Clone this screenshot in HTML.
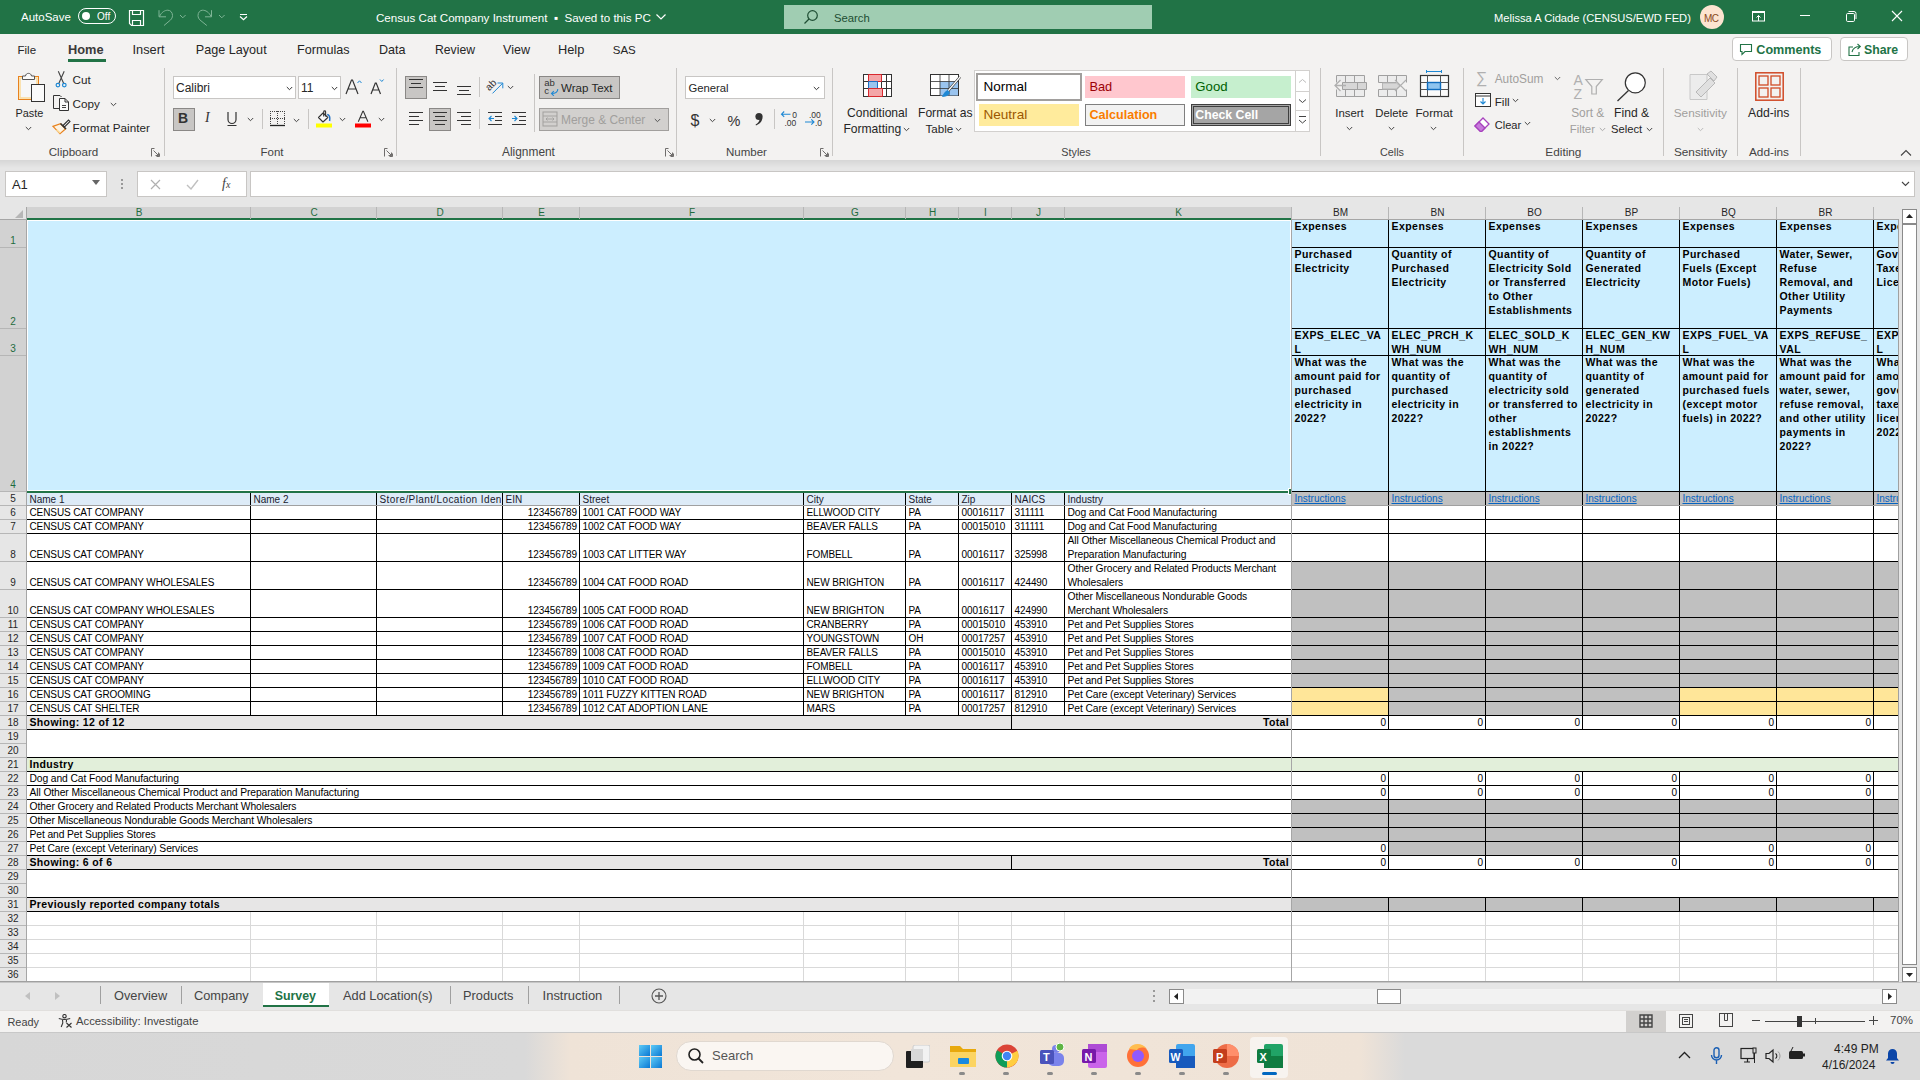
<!DOCTYPE html><html><head><meta charset="utf-8"><style>
*{margin:0;padding:0;box-sizing:border-box}
body{width:1920px;height:1080px;position:relative;overflow:hidden;background:#fff;font-family:"Liberation Sans",sans-serif;color:#000}
body div,body svg{position:absolute}
.t{white-space:nowrap;line-height:1}
.c{white-space:nowrap;font-size:10px;line-height:14px;height:14px}
.ui{font-size:12px;color:#262626;white-space:nowrap;line-height:1}
</style></head><body><div style="left:0;top:0;width:1920px;height:34px;background:#217346"></div>
<div class="t" style="left:21px;top:12px;font-size:11.5px;color:#fff">AutoSave</div>
<div style="left:78px;top:8px;width:38px;height:16px;border:1.3px solid #fff;border-radius:8px"></div>
<div style="left:82px;top:12px;width:8px;height:8px;background:#fff;border-radius:50%"></div>
<div class="t" style="left:97px;top:12px;font-size:10px;color:#fff">Off</div>
<svg style="left:128px;top:9px" width="18" height="18" viewBox="0 0 18 18"><path d="M1.5 1.5h14v15h-12l-2-2z" fill="none" stroke="#fff" stroke-width="1.2"/><path d="M4.5 1.5v4h8v-4M4.5 16.5v-5h8v5" fill="none" stroke="#fff" stroke-width="1.2"/></svg>
<svg style="left:158px;top:9px" width="30" height="18" viewBox="0 0 30 18"><path d="M1 1.2V7.8H8M1.5 7.5C3.5 3 7 1.2 9.8 1.2 12.5 1.2 14.5 3.5 14.5 6.5 14.5 8.5 13.5 10 12.5 11L6 16.5" fill="none" stroke="#7fb596" stroke-width="1"/><path d="M22 6l2.8 2.8L27.6 6" fill="none" stroke="#7fb596" stroke-width="1"/></svg>
<svg style="left:197px;top:9px" width="30" height="18" viewBox="0 0 30 18"><path d="M14.5 1.2V7.8H8M14 7.5C12 3 8.5 1.2 5.7 1.2 3 1.2 1 3.5 1 6.5 1 8.5 2 10 3 11L9.8 16.5" fill="none" stroke="#7fb596" stroke-width="1"/><path d="M22 6l2.8 2.8L27.6 6" fill="none" stroke="#7fb596" stroke-width="1"/></svg>
<svg style="left:239px;top:13px" width="9" height="8" viewBox="0 0 9 8"><path d="M1 1.5h7" stroke="#fff" stroke-width="1"/><path d="M1 3.5l3.5 3.2L8 3.5" fill="none" stroke="#fff" stroke-width="1.2"/></svg>
<div class="t" style="left:376px;top:12px;font-size:11.6px;color:#fff">Census Cat Company Instrument &nbsp;&#x25AA;&nbsp; Saved to this PC</div>
<svg style="left:655px;top:12px" width="12" height="10" viewBox="0 0 12 10"><path d="M1.5 2.5l4.5 4.5 4.5-4.5" fill="none" stroke="#fff" stroke-width="1.2"/></svg>
<div style="left:784px;top:5px;width:368px;height:24px;background:#a0cdb2"></div>
<svg style="left:803px;top:9px" width="16" height="16" viewBox="0 0 16 16"><circle cx="9.5" cy="6.5" r="4.8" fill="none" stroke="#1e4d33" stroke-width="1.2"/><path d="M6 10L1.5 14.5" stroke="#1e4d33" stroke-width="1.3"/></svg>
<div class="t" style="left:834px;top:13px;font-size:11.3px;color:#1e4d33">Search</div>
<div class="t" style="left:1494px;top:13px;font-size:11.15px;color:#fff">Melissa A Cidade (CENSUS/EWD FED)</div>
<div style="left:1700px;top:5px;width:24px;height:24px;border-radius:50%;background:#fce4d0"></div>
<div class="t" style="left:1704px;top:14px;font-size:10px;color:#8a4a1c;letter-spacing:-0.5px">MC</div>
<svg style="left:1751px;top:10px" width="16" height="14" viewBox="0 0 16 14"><rect x="1.5" y="1.5" width="12" height="9.5" fill="none" stroke="#fff" stroke-width="1"/><path d="M1.5 2.5h12M7.5 11V5.5M5.5 7.5l2-2 2 2" fill="none" stroke="#fff" stroke-width="1"/></svg>
<div style="left:1800px;top:15px;width:10px;height:1px;background:#fff"></div>
<svg style="left:1845px;top:10px" width="13" height="13" viewBox="0 0 13 13"><rect x="1.5" y="3.5" width="8" height="8" rx="1.2" fill="none" stroke="#fff" stroke-width="1"/><path d="M3.5 1.5h5.5a2 2 0 0 1 2 2V9" fill="none" stroke="#fff" stroke-width="1"/></svg>
<svg style="left:1891px;top:10px" width="12" height="12" viewBox="0 0 12 12"><path d="M1 1l10 10M11 1L1 11" stroke="#fff" stroke-width="1.1"/></svg>
<div style="left:0;top:34px;width:1920px;height:126px;background:#f3f2f1"></div>
<div class="t" style="left:17.5px;top:45px;font-size:11.5px;color:#262626">File</div>
<div class="t" style="left:68px;top:44px;font-size:12.8px;color:#262626;font-weight:bold;color:#3b3a39">Home</div>
<div class="t" style="left:132.5px;top:44px;font-size:12.8px;color:#262626">Insert</div>
<div class="t" style="left:195.75px;top:44px;font-size:12.64px;color:#262626">Page Layout</div>
<div class="t" style="left:297px;top:44px;font-size:12.6px;color:#262626">Formulas</div>
<div class="t" style="left:379px;top:44px;font-size:12.55px;color:#262626">Data</div>
<div class="t" style="left:435px;top:44px;font-size:12.2px;color:#262626">Review</div>
<div class="t" style="left:503px;top:44px;font-size:12.56px;color:#262626">View</div>
<div class="t" style="left:558px;top:44px;font-size:12.8px;color:#262626">Help</div>
<div class="t" style="left:612.75px;top:45px;font-size:11.5px;color:#262626">SAS</div>
<div style="left:68px;top:59px;width:38px;height:3px;background:#217346"></div>
<div style="left:1732px;top:37px;width:100px;height:24px;border:1px solid #c8c6c4;border-radius:4px;background:#fff"></div>
<svg style="left:1739px;top:43px" width="14" height="13" viewBox="0 0 14 13"><path d="M1.5 1.5h11v7H6l-3 3v-3H1.5z" fill="none" stroke="#217346" stroke-width="1.1"/></svg>
<div class="t" style="left:1756.3px;top:44px;font-size:12.6px;color:#217346;font-weight:bold">Comments</div>
<div style="left:1840px;top:37px;width:68px;height:24px;border:1px solid #c8c6c4;border-radius:4px;background:#fff"></div>
<svg style="left:1847px;top:42px" width="16" height="15" viewBox="0 0 16 15"><path d="M6 5H2v8.5h10V10" fill="none" stroke="#217346" stroke-width="1.1"/><path d="M5 10c1-4 4-5.5 8-5.5M10.5 2l2.8 2.5-2.8 2.5" fill="none" stroke="#217346" stroke-width="1.1"/></svg>
<div class="t" style="left:1864px;top:44px;font-size:12.3px;color:#217346;font-weight:bold">Share</div>
<svg style="left:16px;top:70px" width="32" height="34" viewBox="0 0 32 34"><rect x="2.5" y="6.5" width="20" height="23" fill="#f7f7f7" stroke="#e8821e" stroke-width="1"/><rect x="4" y="8" width="17" height="20" fill="none" stroke="#fbdb9a" stroke-width="1.5"/><path d="M6.5 9.5V6H9.5C9.8 2.5 15.2 2.5 15.5 6H18.5V9.5z" fill="#fafafa" stroke="#555" stroke-width="1"/><rect x="15.5" y="14.5" width="13" height="17" fill="#fafafa" stroke="#333" stroke-width="1"/></svg>
<div class="t" style="left:15.5px;top:108px;font-size:10.9px;color:#262626">Paste</div>
<svg style="left:25px;top:126px" width="7" height="5" viewBox="0 0 7 5"><path d="M0.8 1l2.7 2.7L6.2 1" fill="none" stroke="#444" stroke-width="1"/></svg>
<svg style="left:55px;top:71px" width="13" height="17" viewBox="0 0 13 17"><path d="M3.3 0.3L8.6 12.2M9.2 0.3L3.9 12.2" stroke="#444" stroke-width="1.1"/><circle cx="2.9" cy="14.1" r="1.8" fill="none" stroke="#1e88d4" stroke-width="1.2"/><circle cx="9.3" cy="14.1" r="1.8" fill="none" stroke="#1e88d4" stroke-width="1.2"/></svg>
<div class="t" style="left:72.5px;top:74px;font-size:11.7px;color:#262626">Cut</div>
<svg style="left:52px;top:94px" width="18" height="18" viewBox="0 0 18 18"><path d="M7 14.5H1.5V1.5H8L9.5 3" fill="none" stroke="#333" stroke-width="1"/><path d="M7.5 4.5H13L16.5 8V16.5H7.5Z" fill="#fafafa" stroke="#333" stroke-width="1"/><path d="M13 4.5V8H16.5" fill="none" stroke="#333" stroke-width="1"/><path d="M10 11.5H14M10 13.5H14" stroke="#444" stroke-width="1"/></svg>
<div class="t" style="left:72.5px;top:98px;font-size:11.7px;color:#262626">Copy</div>
<svg style="left:110px;top:102px" width="7" height="5" viewBox="0 0 7 5"><path d="M0.8 1l2.7 2.7L6.2 1" fill="none" stroke="#444" stroke-width="1"/></svg>
<svg style="left:52px;top:117px" width="19" height="18" viewBox="0 0 19 18"><path d="M1 9.4L8 16.75 13.5 12 8.5 6.7Z" fill="#fdf3e3" stroke="#e8821e" stroke-width="1.2"/><path d="M4.5 12.8L8.2 16" stroke="#fbdb9a" stroke-width="1.6"/><path d="M11 8.5L16.5 3 18 4.5 12.5 10Z" fill="#fafafa" stroke="#333" stroke-width="1.1"/><path d="M8.5 6.5L14 12" stroke="#333" stroke-width="1.6"/></svg>
<div class="t" style="left:72.5px;top:122px;font-size:11.7px;color:#262626">Format Painter</div>
<div class="t" style="left:13.5px;top:146px;width:120px;text-align:center;font-size:11.6px;color:#444">Clipboard</div>
<svg style="left:151px;top:148px" width="9" height="9" viewBox="0 0 9 9"><path d="M0.5 8.5V0.5h3M8.5 5.5v3h-3M2.5 2.5l5 5M4.5 7.5h3v-3" fill="none" stroke="#605e5c" stroke-width="0.9"/></svg>
<div style="left:164px;top:68px;width:1px;height:88px;background:#c8c6c4"></div>
<div style="left:173px;top:76px;width:123px;height:23px;background:#fff;border:1px solid #c8c6c4"></div>
<div class="t" style="left:176px;top:82px;font-size:12px;color:#262626">Calibri</div>
<svg style="left:285.5px;top:86px" width="7" height="5" viewBox="0 0 7 5"><path d="M0.8 1l2.7 2.7L6.2 1" fill="none" stroke="#333" stroke-width="1"/></svg>
<div style="left:298px;top:76px;width:43px;height:23px;background:#fff;border:1px solid #c8c6c4"></div>
<div class="t" style="left:301px;top:82px;font-size:12px;color:#262626">11</div>
<svg style="left:331px;top:86px" width="7" height="5" viewBox="0 0 7 5"><path d="M0.8 1l2.7 2.7L6.2 1" fill="none" stroke="#333" stroke-width="1"/></svg>
<svg style="left:345px;top:78px" width="40" height="18" viewBox="0 0 40 18"><path d="M1 16L6.5 2h1L13 16M3.2 11h8" fill="none" stroke="#333" stroke-width="1.2"/><path d="M12.5 5l2-2.2 2 2.2" fill="none" stroke="#1e88d4" stroke-width="1"/><path d="M26 16l4.3-11h0.9L35.5 16M27.8 12h5.9" fill="none" stroke="#333" stroke-width="1.2"/><path d="M35 1.5l1.8 2 1.8-2" fill="none" stroke="#1e88d4" stroke-width="1"/></svg>
<div style="left:173px;top:108px;width:22px;height:23px;background:#c8c6c4;border:1px solid #8a8886"></div>
<div class="t" style="left:178px;top:111px;font-size:14px;font-weight:bold;color:#333">B</div>
<div class="t" style="left:205px;top:111px;font-size:14px;font-style:italic;font-family:'Liberation Serif';color:#333">I</div>
<svg style="left:225px;top:110px" width="14" height="18" viewBox="0 0 14 18"><path d="M3 2v7.5a4 4 0 0 0 8 0V2M2.5 15.5h9" fill="none" stroke="#333" stroke-width="1.2"/></svg>
<svg style="left:246.5px;top:117px" width="7" height="5" viewBox="0 0 7 5"><path d="M0.8 1l2.7 2.7L6.2 1" fill="none" stroke="#444" stroke-width="1"/></svg>
<div style="left:262px;top:109px;width:1px;height:20px;background:#c8c6c4"></div>
<svg style="left:269px;top:110px" width="17" height="17" viewBox="0 0 17 17"><path d="M1 1.5h15M1 8.5h15" fill="none" stroke="#444" stroke-width="1" stroke-dasharray="1 1"/><path d="M1.5 1v14M8.5 1v14M15.5 1v14" fill="none" stroke="#444" stroke-width="1" stroke-dasharray="1 1"/><path d="M1 15.5h15" stroke="#222" stroke-width="1.3"/></svg>
<svg style="left:293px;top:118px" width="7" height="5" viewBox="0 0 7 5"><path d="M0.8 1l2.7 2.7L6.2 1" fill="none" stroke="#444" stroke-width="1"/></svg>
<div style="left:308px;top:109px;width:1px;height:20px;background:#c8c6c4"></div>
<svg style="left:315px;top:110px" width="18" height="18" viewBox="0 0 18 18"><path d="M3.5 7.5L8 3 12.8 7.5 8 12Z" fill="#fafafa" stroke="#333" stroke-width="1.1" stroke-linejoin="round"/><path d="M8.7 6.5V1.8C8.7 0.6 10.6 0.6 10.6 1.8V6.5" fill="none" stroke="#333" stroke-width="1.1"/><path d="M12.2 4.4C14.5 4.8 15.3 7.5 14.6 11" fill="none" stroke="#1e6fc4" stroke-width="1.5"/><rect x="1" y="13.5" width="16" height="4" fill="#ffff00"/></svg>
<svg style="left:338.5px;top:117px" width="7" height="5" viewBox="0 0 7 5"><path d="M0.8 1l2.7 2.7L6.2 1" fill="none" stroke="#444" stroke-width="1"/></svg>
<svg style="left:354px;top:110px" width="18" height="18" viewBox="0 0 18 18"><path d="M4.3 11.8L8.8 1.2h0.6L13.9 11.8M6 7.8h6.2" fill="none" stroke="#333" stroke-width="1.05"/><rect x="1" y="13.5" width="16" height="4" fill="#ff0000"/></svg>
<svg style="left:377.5px;top:117px" width="7" height="5" viewBox="0 0 7 5"><path d="M0.8 1l2.7 2.7L6.2 1" fill="none" stroke="#444" stroke-width="1"/></svg>
<div class="t" style="left:212px;top:147px;width:120px;text-align:center;font-size:11.5px;color:#444">Font</div>
<svg style="left:384px;top:148px" width="9" height="9" viewBox="0 0 9 9"><path d="M0.5 8.5V0.5h3M8.5 5.5v3h-3M2.5 2.5l5 5M4.5 7.5h3v-3" fill="none" stroke="#605e5c" stroke-width="0.9"/></svg>
<div style="left:396px;top:68px;width:1px;height:88px;background:#c8c6c4"></div>
<div style="left:405px;top:76px;width:22px;height:23px;background:#c8c6c4;border:1px solid #8a8886"></div>
<svg style="left:409px;top:79px" width="14" height="14" viewBox="0 0 14 14"><path d="M0.0 0.5h14" stroke="#333" stroke-width="1"/><path d="M2.0 4.5h10" stroke="#333" stroke-width="1"/><path d="M0.0 8.5h14" stroke="#333" stroke-width="1"/></svg>
<svg style="left:433px;top:82px" width="14" height="14" viewBox="0 0 14 14"><path d="M0.0 0.5h14" stroke="#333" stroke-width="1"/><path d="M2.0 4.5h10" stroke="#333" stroke-width="1"/><path d="M0.0 8.5h14" stroke="#333" stroke-width="1"/></svg>
<svg style="left:457px;top:86px" width="14" height="14" viewBox="0 0 14 14"><path d="M0.0 0.5h14" stroke="#333" stroke-width="1"/><path d="M2.0 4.5h10" stroke="#333" stroke-width="1"/><path d="M0.0 8.5h14" stroke="#333" stroke-width="1"/></svg>
<div style="left:429px;top:108px;width:22px;height:23px;background:#c8c6c4;border:1px solid #8a8886"></div>
<svg style="left:409px;top:112px" width="14" height="14" viewBox="0 0 14 14"><path d="M0 0.5h14M0 4.5h10M0 8.5h14M0 12.5h10" stroke="#333" stroke-width="1"/></svg>
<svg style="left:433px;top:112px" width="14" height="14" viewBox="0 0 14 14"><path d="M0 0.5h14M2 4.5h10M0 8.5h14M2 12.5h10" stroke="#333" stroke-width="1"/></svg>
<svg style="left:457px;top:112px" width="14" height="14" viewBox="0 0 14 14"><path d="M0 0.5h14M4 4.5h10M0 8.5h14M4 12.5h10" stroke="#333" stroke-width="1"/></svg>
<div style="left:479px;top:77px;width:1px;height:20px;background:#c8c6c4"></div>
<div style="left:479px;top:109px;width:1px;height:20px;background:#c8c6c4"></div>
<svg style="left:486px;top:77px" width="19" height="18" viewBox="0 0 19 18"><text x="0" y="0" font-size="10" font-family="Liberation Sans" fill="#333" transform="translate(3.2 14.2) rotate(-45)">ab</text><path d="M6.5 16.4L16.5 6.4M11.5 6H16.8V11.3" fill="none" stroke="#1e88d4" stroke-width="1"/></svg>
<svg style="left:507px;top:85px" width="7" height="5" viewBox="0 0 7 5"><path d="M0.8 1l2.7 2.7L6.2 1" fill="none" stroke="#444" stroke-width="1"/></svg>
<svg style="left:488px;top:112px" width="16" height="14" viewBox="0 0 16 14"><path d="M0 0.5h14M7 4.5h7M7 8.5h7M0 12.5h14" stroke="#333" stroke-width="1"/><path d="M1 6.5h5M3.5 4L1 6.5 3.5 9" fill="none" stroke="#1e88d4" stroke-width="1.1"/></svg>
<svg style="left:512px;top:112px" width="16" height="14" viewBox="0 0 16 14"><path d="M0 0.5h14M7 4.5h7M7 8.5h7M0 12.5h14" stroke="#333" stroke-width="1"/><path d="M0 6.5h5M2.5 4L5 6.5 2.5 9" fill="none" stroke="#1e88d4" stroke-width="1.1"/></svg>
<div style="left:534px;top:74px;width:1px;height:58px;background:#c8c6c4"></div>
<div style="left:539px;top:76px;width:81px;height:23px;background:#c8c6c4;border:1px solid #8a8886"></div>
<svg style="left:543px;top:78px" width="16" height="18" viewBox="0 0 16 18"><text x="1.2" y="8" font-size="9.5" font-family="Liberation Sans" fill="#333">ab</text><text x="1.2" y="15.8" font-size="9.5" font-family="Liberation Sans" fill="#333">c</text><path d="M14.8 11C14.8 13.8 12.8 15.5 8.5 15.5M10.8 13.2L8.5 15.5 10.8 17.8" fill="none" stroke="#1e88d4" stroke-width="1.1"/></svg>
<div class="t" style="left:561px;top:83px;font-size:11.55px;color:#262626">Wrap Text</div>
<div style="left:539px;top:108px;width:130px;height:23px;background:#d2d0ce;border:1px solid #a19f9d"></div>
<svg style="left:542px;top:111px" width="16" height="16" viewBox="0 0 16 16"><rect x="1" y="1" width="14" height="14" fill="none" stroke="#a19f9d"/><path d="M1 5h14M1 11h14M4 8h8M5.5 6.5L4 8l1.5 1.5M10.5 6.5L12 8l-1.5 1.5" fill="none" stroke="#a19f9d" stroke-width="0.9"/></svg>
<div class="t" style="left:561px;top:115px;font-size:11.95px;color:#a19f9d">Merge &amp; Center</div>
<svg style="left:654px;top:118px" width="7" height="5" viewBox="0 0 7 5"><path d="M0.8 1l2.7 2.7L6.2 1" fill="none" stroke="#555" stroke-width="1"/></svg>
<div class="t" style="left:468.5px;top:147px;width:120px;text-align:center;font-size:11.9px;color:#444">Alignment</div>
<svg style="left:665px;top:148px" width="9" height="9" viewBox="0 0 9 9"><path d="M0.5 8.5V0.5h3M8.5 5.5v3h-3M2.5 2.5l5 5M4.5 7.5h3v-3" fill="none" stroke="#605e5c" stroke-width="0.9"/></svg>
<div style="left:676px;top:68px;width:1px;height:88px;background:#c8c6c4"></div>
<div style="left:685px;top:76px;width:140px;height:23px;background:#fff;border:1px solid #c8c6c4"></div>
<div class="t" style="left:688.4px;top:83px;font-size:11.3px;color:#262626">General</div>
<svg style="left:813px;top:86px" width="7" height="5" viewBox="0 0 7 5"><path d="M0.8 1l2.7 2.7L6.2 1" fill="none" stroke="#333" stroke-width="1"/></svg>
<div class="t" style="left:690.5px;top:113px;font-size:16px;color:#333">$</div>
<svg style="left:709px;top:118px" width="7" height="5" viewBox="0 0 7 5"><path d="M0.8 1l2.7 2.7L6.2 1" fill="none" stroke="#444" stroke-width="1"/></svg>
<div class="t" style="left:727.5px;top:114px;font-size:14.5px;color:#333">%</div>
<svg style="left:754px;top:112px" width="10" height="14" viewBox="0 0 10 14"><circle cx="5" cy="4.5" r="3.6" fill="#333"/><path d="M8.4 5.5C8.4 9 6 12 2 13.5L1.6 12.5C4 11.2 5.3 9.5 5.5 7.5z" fill="#333"/></svg>
<div style="left:774px;top:109px;width:1px;height:20px;background:#c8c6c4"></div>
<svg style="left:780px;top:109px" width="20" height="18" viewBox="0 0 20 18"><text x="12.3" y="8.5" font-size="8.5" font-family="Liberation Sans" fill="#333">0</text><text x="4.5" y="16.5" font-size="8.5" font-family="Liberation Sans" fill="#333">.00</text><path d="M1.5 5.2h9M4.2 2.5L1.5 5.2 4.2 7.9" fill="none" stroke="#1e88d4" stroke-width="1.1"/></svg>
<svg style="left:804px;top:109px" width="20" height="18" viewBox="0 0 20 18"><text x="5" y="8.5" font-size="8.5" font-family="Liberation Sans" fill="#333">.00</text><text x="11" y="16.5" font-size="8.5" font-family="Liberation Sans" fill="#333">.0</text><path d="M1 13h9M7.3 10.3L10 13l-2.7 2.7" fill="none" stroke="#1e88d4" stroke-width="1.1"/></svg>
<div class="t" style="left:686.5px;top:147px;width:120px;text-align:center;font-size:11.5px;color:#444">Number</div>
<svg style="left:820px;top:148px" width="9" height="9" viewBox="0 0 9 9"><path d="M0.5 8.5V0.5h3M8.5 5.5v3h-3M2.5 2.5l5 5M4.5 7.5h3v-3" fill="none" stroke="#605e5c" stroke-width="0.9"/></svg>
<div style="left:832px;top:68px;width:1px;height:88px;background:#c8c6c4"></div>
<svg style="left:863px;top:74px" width="30" height="24" viewBox="0 0 30 24"><rect x="0.5" y="0.5" width="28" height="22" fill="#fff" stroke="#333"/><path d="M5.5 0.5v22M18.5 0.5v22M23.5 0.5v22M0.5 7.5h28M0.5 14.5h28" stroke="#333" stroke-width="1" fill="none"/><rect x="6" y="1" width="12" height="6" fill="#f4a6a8"/><path d="M5.5 0.5h13v7h-13z" fill="none" stroke="#d9282e"/><rect x="6" y="8" width="8" height="6" fill="#9ac4ef"/><path d="M5.5 7.5h9v7h-9z" fill="none" stroke="#1e6fc4"/><rect x="6" y="15" width="14" height="7" fill="#f4a6a8"/><path d="M5.5 14.5h14v8h-14z" fill="none" stroke="#d9282e"/></svg>
<div class="t" style="left:847px;top:107px;font-size:12.1px;color:#262626">Conditional</div>
<div class="t" style="left:843.4px;top:123px;font-size:12.1px;color:#262626">Formatting</div>
<svg style="left:903px;top:127px" width="7" height="5" viewBox="0 0 7 5"><path d="M0.8 1l2.7 2.7L6.2 1" fill="none" stroke="#444" stroke-width="1"/></svg>
<svg style="left:930px;top:74px" width="32" height="28" viewBox="0 0 32 28"><rect x="0.5" y="0.5" width="28" height="21" fill="#fff" stroke="#333"/><rect x="10" y="7.5" width="18" height="14" fill="#9ac4ef"/><path d="M0.5 7.5h28M0.5 14.5h28M10 0.5v21M19 0.5v21" stroke="#333" stroke-width="0.8"/><path d="M30 3L18 17" stroke="#333" stroke-width="2.6"/><path d="M30 3L18 17" stroke="#fff" stroke-width="1.2"/><path d="M18 16c-3 1-5 4-6 7 3 0 6-1 8-4z" fill="#1e88d4"/></svg>
<div class="t" style="left:918px;top:107px;font-size:12.1px;color:#262626">Format as</div>
<div class="t" style="left:925.5px;top:123px;font-size:11.6px;color:#262626">Table</div>
<svg style="left:955px;top:127px" width="7" height="5" viewBox="0 0 7 5"><path d="M0.8 1l2.7 2.7L6.2 1" fill="none" stroke="#444" stroke-width="1"/></svg>
<div style="left:974px;top:70px;width:336px;height:62px;background:#fff;border:1px solid #d2d0ce"></div>
<div style="left:976px;top:73px;width:106px;height:28px;background:#fff;border:2px solid #a19f9d"></div>
<div style="left:978px;top:75px;width:102px;height:24px;border:1px solid #fff"></div>
<div class="t" style="left:983.4px;top:80px;font-size:13.5px;color:#000">Normal</div>
<div style="left:1085px;top:76px;width:100px;height:22px;background:#ffc7ce"></div>
<div class="t" style="left:1089.4px;top:81px;font-size:12.8px;color:#9c0006">Bad</div>
<div style="left:1191px;top:76px;width:100px;height:22px;background:#c6efce"></div>
<div class="t" style="left:1195.3px;top:80px;font-size:13.2px;color:#006100">Good</div>
<div style="left:979px;top:104px;width:100px;height:22px;background:#ffeb9c"></div>
<div class="t" style="left:983.4px;top:108px;font-size:13.6px;color:#9c5700">Neutral</div>
<div style="left:1085px;top:104px;width:100px;height:22px;background:#f2f2f2;border:1px solid #7f7f7f"></div>
<div class="t" style="left:1089.4px;top:109px;font-size:12.6px;color:#fa7d00;font-weight:bold">Calculation</div>
<div style="left:1191px;top:104px;width:100px;height:22px;background:#a5a5a5;border:3px double #3f3f3f"></div>
<div class="t" style="left:1195.3px;top:109px;font-size:12.3px;color:#fff;font-weight:bold">Check Cell</div>
<div style="left:1295px;top:70px;width:15px;height:62px;background:#fff;border:1px solid #d2d0ce"></div>
<div style="left:1295px;top:91px;width:15px;height:20px;border:1px solid #d2d0ce"></div>
<svg style="left:1298px;top:78px" width="9" height="6" viewBox="0 0 9 6"><path d="M1 4.5l3.5-3 3.5 3" fill="none" stroke="#bbb" stroke-width="1"/></svg>
<svg style="left:1298px;top:98px" width="9" height="6" viewBox="0 0 9 6"><path d="M1 1.5l3.5 3 3.5-3" fill="none" stroke="#444" stroke-width="1"/></svg>
<svg style="left:1298px;top:115px" width="9" height="10" viewBox="0 0 9 10"><path d="M1 1.5h7M1 5l3.5 3 3.5-3" fill="none" stroke="#444" stroke-width="1"/></svg>
<div class="t" style="left:1016px;top:147px;width:120px;text-align:center;font-size:10.8px;color:#444">Styles</div>
<div style="left:1320px;top:68px;width:1px;height:88px;background:#c8c6c4"></div>
<svg style="left:1334px;top:74px" width="34" height="24" viewBox="0 0 34 24"><path d="M2.5 8.5V1.5H30.5V8.5M2.5 15.5V22.5H30.5V15.5M11.5 1.5V8.5M20.5 1.5V8.5M11.5 15.5V22.5M20.5 15.5V22.5" fill="#ececec" stroke="#a0a0a0" stroke-width="1"/><path d="M8.5 8.5H32.5V15.5H8.5Z" fill="#d6d6d6" stroke="#a0a0a0" stroke-width="1"/><path d="M23.5 8.5V15.5" stroke="#a0a0a0"/><path d="M1 11.5H12M6.5 6L1 11.5 6.5 17" fill="none" stroke="#b0b0b0" stroke-width="1.3"/></svg>
<svg style="left:1377px;top:74px" width="34" height="24" viewBox="0 0 34 24"><path d="M1.5 8.5V1.5H29.5V8.5M1.5 15.5V22.5H29.5V15.5M10.5 1.5V8.5M19.5 1.5V8.5M10.5 15.5V22.5M19.5 15.5V22.5M1.5 8.5H19M1.5 15.5H19" fill="#ececec" stroke="#a0a0a0" stroke-width="1"/><path d="M5.5 9H19.5L23 12 19.5 15H5.5Z" fill="#d6d6d6" stroke="#b5b5b5" stroke-width="1"/><path d="M18 6L29 17M29 6L18 17" stroke="#b0b0b0" stroke-width="1.1"/></svg>
<svg style="left:1419px;top:70px" width="31" height="28" viewBox="0 0 31 28"><rect x="1.5" y="5.5" width="28" height="21" fill="#fafafa" stroke="#333" stroke-width="1.2"/><path d="M1.5 12.5H29.5M1.5 19.5H29.5M8.5 5.5V26.5M21.5 5.5V26.5" stroke="#555" stroke-width="1"/><rect x="8.5" y="12.5" width="13" height="7" fill="#8ec4ef" stroke="#0f6cbd" stroke-width="1.4"/><path d="M7 1.5H23M7.5 0V3M22.5 0V3" stroke="#1e88d4" stroke-width="1"/></svg>
<div class="t" style="left:1335.3px;top:108px;font-size:11.4px;color:#262626">Insert</div>
<svg style="left:1346px;top:126px" width="7" height="5" viewBox="0 0 7 5"><path d="M0.8 1l2.7 2.7L6.2 1" fill="none" stroke="#444" stroke-width="1"/></svg>
<div class="t" style="left:1375.3px;top:108px;font-size:11.3px;color:#262626">Delete</div>
<svg style="left:1388px;top:126px" width="7" height="5" viewBox="0 0 7 5"><path d="M0.8 1l2.7 2.7L6.2 1" fill="none" stroke="#444" stroke-width="1"/></svg>
<div class="t" style="left:1415.4px;top:108px;font-size:11.8px;color:#262626">Format</div>
<svg style="left:1430px;top:126px" width="7" height="5" viewBox="0 0 7 5"><path d="M0.8 1l2.7 2.7L6.2 1" fill="none" stroke="#444" stroke-width="1"/></svg>
<div class="t" style="left:1332px;top:147px;width:120px;text-align:center;font-size:10.8px;color:#444">Cells</div>
<div style="left:1463px;top:68px;width:1px;height:88px;background:#c8c6c4"></div>
<div class="t" style="left:1476px;top:70px;font-size:16px;color:#b0b0b0">&#x2211;</div>
<div class="t" style="left:1494.7px;top:74px;font-size:11.85px;color:#a19f9d">AutoSum</div>
<svg style="left:1554px;top:76px" width="7" height="5" viewBox="0 0 7 5"><path d="M0.8 1l2.7 2.7L6.2 1" fill="none" stroke="#666" stroke-width="1"/></svg>
<svg style="left:1475px;top:93px" width="17" height="15" viewBox="0 0 17 15"><rect x="0.5" y="0.5" width="15" height="13" fill="#fff" stroke="#333"/><path d="M0.5 3h15" stroke="#333"/><path d="M8 5v6M5.5 8.5L8 11l2.5-2.5" fill="none" stroke="#1e88d4" stroke-width="1.1"/></svg>
<div class="t" style="left:1494.7px;top:96px;font-size:11.7px;color:#262626">Fill</div>
<svg style="left:1512px;top:98px" width="7" height="5" viewBox="0 0 7 5"><path d="M0.8 1l2.7 2.7L6.2 1" fill="none" stroke="#444" stroke-width="1"/></svg>
<svg style="left:1474px;top:116px" width="17" height="16" viewBox="0 0 17 16"><path d="M1 10l8-8 6 6-8 8z" fill="#fff" stroke="#a742be" stroke-width="1.3"/><path d="M1 10l4-4 6 6-4 4z" fill="#c77bdb" stroke="#a742be" stroke-width="1.3"/></svg>
<div class="t" style="left:1494.7px;top:120px;font-size:11.1px;color:#262626">Clear</div>
<svg style="left:1524px;top:121px" width="7" height="5" viewBox="0 0 7 5"><path d="M0.8 1l2.7 2.7L6.2 1" fill="none" stroke="#444" stroke-width="1"/></svg>
<svg style="left:1573px;top:72px" width="32" height="30" viewBox="0 0 32 30"><text x="0.5" y="12.7" font-size="14" font-family="Liberation Sans" fill="#b0b0b0">A</text><text x="0.5" y="26.7" font-size="14" font-family="Liberation Sans" fill="#b0b0b0">Z</text><path d="M12.8 7.5h16.5l-6 7v7.5h-4.5v-7.5z" fill="none" stroke="#b0b0b0" stroke-width="1.2"/></svg>
<div class="t" style="left:1571.2px;top:108px;font-size:11.9px;color:#a19f9d">Sort &amp;</div>
<div class="t" style="left:1569.7px;top:124px;font-size:11.4px;color:#a19f9d">Filter</div>
<svg style="left:1599px;top:127px" width="7" height="5" viewBox="0 0 7 5"><path d="M0.8 1l2.7 2.7L6.2 1" fill="none" stroke="#aaa" stroke-width="1"/></svg>
<svg style="left:1614px;top:70px" width="34" height="32" viewBox="0 0 34 32"><circle cx="21.3" cy="12.8" r="10" fill="#fff" stroke="#333" stroke-width="1.2"/><path d="M14.5 20.5L3.5 31" stroke="#333" stroke-width="1.3"/></svg>
<div class="t" style="left:1614.1px;top:107px;font-size:12.1px;color:#262626">Find &amp;</div>
<div class="t" style="left:1611px;top:124px;font-size:11.2px;color:#262626">Select</div>
<svg style="left:1646px;top:127px" width="7" height="5" viewBox="0 0 7 5"><path d="M0.8 1l2.7 2.7L6.2 1" fill="none" stroke="#444" stroke-width="1"/></svg>
<div class="t" style="left:1503.4px;top:147px;width:120px;text-align:center;font-size:11.8px;color:#444">Editing</div>
<div style="left:1663px;top:68px;width:1px;height:88px;background:#c8c6c4"></div>
<svg style="left:1689px;top:70px" width="30" height="32" viewBox="0 0 30 32"><path d="M1 4.5h17v25H1z" fill="#ececec" stroke="#c8c8c8" stroke-width="1"/><path d="M7 22l14-14 5 5-14 14z" fill="#e0e0e0" stroke="#b8b8b8"/><path d="M18 4l4-3 6 6-3 4z" fill="#e0e0e0" stroke="#b8b8b8"/></svg>
<div class="t" style="left:1673.75px;top:108px;font-size:11.8px;color:#a19f9d">Sensitivity</div>
<svg style="left:1697px;top:127px" width="7" height="5" viewBox="0 0 7 5"><path d="M0.8 1l2.7 2.7L6.2 1" fill="none" stroke="#bbb" stroke-width="1"/></svg>
<div class="t" style="left:1640.5px;top:147px;width:120px;text-align:center;font-size:11.8px;color:#444">Sensitivity</div>
<div style="left:1737px;top:68px;width:1px;height:88px;background:#c8c6c4"></div>
<svg style="left:1755px;top:72px" width="29" height="29" viewBox="0 0 29 29"><rect x="0.8" y="0.8" width="27.4" height="27.4" fill="none" stroke="#d04a26" stroke-width="1.5"/><rect x="4" y="4" width="9" height="9" fill="none" stroke="#d04a26" stroke-width="1.3"/><rect x="16" y="4" width="9" height="9" fill="none" stroke="#d04a26" stroke-width="1.3"/><rect x="4" y="16" width="9" height="9" fill="none" stroke="#d04a26" stroke-width="1.3"/><rect x="16" y="16" width="9" height="9" fill="none" stroke="#d04a26" stroke-width="1.3"/></svg>
<div class="t" style="left:1748px;top:107px;font-size:12.2px;color:#262626">Add-ins</div>
<div class="t" style="left:1709px;top:147px;width:120px;text-align:center;font-size:11.8px;color:#444">Add-ins</div>
<div style="left:1800px;top:68px;width:1px;height:88px;background:#c8c6c4"></div>
<svg style="left:1900px;top:149px" width="12" height="8" viewBox="0 0 12 8"><path d="M1 6.5l5-5 5 5" fill="none" stroke="#444" stroke-width="1.1"/></svg>
<div style="left:0;top:160px;width:1920px;height:47px;background:#e6e6e6"></div>
<div style="left:0;top:160px;width:1920px;height:8px;background:linear-gradient(#d6d6d6,#e6e6e6)"></div>
<div style="left:5px;top:171px;width:102px;height:26px;background:#fff;border:1px solid #c8c6c4"></div>
<div class="t" style="left:11.9px;top:178px;font-size:13px;color:#262626">A1</div>
<svg style="left:92px;top:180px" width="8" height="5" viewBox="0 0 8 5"><path d="M0 0h8L4 5z" fill="#666"/></svg>
<div style="left:121px;top:179px;width:2px;height:2px;background:#999"></div><div style="left:121px;top:183px;width:2px;height:2px;background:#999"></div><div style="left:121px;top:187px;width:2px;height:2px;background:#999"></div>
<div style="left:137px;top:171px;width:110px;height:26px;background:#fff;border:1px solid #c8c6c4"></div>
<svg style="left:150px;top:179px" width="11" height="11" viewBox="0 0 11 11"><path d="M1 1l9 9M10 1l-9 9" stroke="#b0b0b0" stroke-width="1.2"/></svg>
<svg style="left:186px;top:179px" width="13" height="11" viewBox="0 0 13 11"><path d="M1 6l4 4 7-9" fill="none" stroke="#c0c0c0" stroke-width="1.4"/></svg>
<div class="t" style="left:222px;top:177px;font-size:14px;font-family:'Liberation Serif';color:#444"><i>f</i><span style="font-size:10px"><i>x</i></span></div>
<div style="left:250px;top:171px;width:1665px;height:26px;background:#fff;border:1px solid #c8c6c4"></div>
<svg style="left:1901px;top:181px" width="9" height="6" viewBox="0 0 9 6"><path d="M1 1l3.5 3.5L8 1" fill="none" stroke="#444" stroke-width="1.1"/></svg>
<div style="left:0;top:207px;width:1900px;height:775px;background:#fff;overflow:hidden" id="grid">
<div style="left:250px;top:704px;width:1px;height:71px;background:#d9d9d9"></div>
<div style="left:376px;top:704px;width:1px;height:71px;background:#d9d9d9"></div>
<div style="left:502px;top:704px;width:1px;height:71px;background:#d9d9d9"></div>
<div style="left:579px;top:704px;width:1px;height:71px;background:#d9d9d9"></div>
<div style="left:803px;top:704px;width:1px;height:71px;background:#d9d9d9"></div>
<div style="left:905px;top:704px;width:1px;height:71px;background:#d9d9d9"></div>
<div style="left:958px;top:704px;width:1px;height:71px;background:#d9d9d9"></div>
<div style="left:1011px;top:704px;width:1px;height:71px;background:#d9d9d9"></div>
<div style="left:1064px;top:704px;width:1px;height:71px;background:#d9d9d9"></div>
<div style="left:1291px;top:704px;width:1px;height:71px;background:#d9d9d9"></div>
<div style="left:1388px;top:704px;width:1px;height:71px;background:#d9d9d9"></div>
<div style="left:1485px;top:704px;width:1px;height:71px;background:#d9d9d9"></div>
<div style="left:1582px;top:704px;width:1px;height:71px;background:#d9d9d9"></div>
<div style="left:1679px;top:704px;width:1px;height:71px;background:#d9d9d9"></div>
<div style="left:1776px;top:704px;width:1px;height:71px;background:#d9d9d9"></div>
<div style="left:1873px;top:704px;width:1px;height:71px;background:#d9d9d9"></div>
<div style="left:27px;top:718px;width:1871px;height:1px;background:#d9d9d9"></div>
<div style="left:27px;top:732px;width:1871px;height:1px;background:#d9d9d9"></div>
<div style="left:27px;top:746px;width:1871px;height:1px;background:#d9d9d9"></div>
<div style="left:27px;top:760px;width:1871px;height:1px;background:#d9d9d9"></div>
<div style="left:27px;top:774px;width:1871px;height:1px;background:#d9d9d9"></div>
<div style="left:27px;top:13px;width:1264px;height:271px;background:#cceeff"></div>
<div style="left:1292px;top:13px;width:606px;height:271px;background:#cceeff"></div>
<div style="left:1291px;top:12px;width:607px;height:1px;background:#000"></div>
<div style="left:1291px;top:40px;width:607px;height:1px;background:#000"></div>
<div style="left:1291px;top:121px;width:607px;height:1px;background:#000"></div>
<div style="left:1291px;top:148px;width:607px;height:1px;background:#000"></div>
<div style="left:1291px;top:284px;width:607px;height:1px;background:#000"></div>
<div style="left:1291px;top:12px;width:1px;height:273px;background:#000"></div>
<div style="left:1388px;top:12px;width:1px;height:273px;background:#000"></div>
<div style="left:1485px;top:12px;width:1px;height:273px;background:#000"></div>
<div style="left:1582px;top:12px;width:1px;height:273px;background:#000"></div>
<div style="left:1679px;top:12px;width:1px;height:273px;background:#000"></div>
<div style="left:1776px;top:12px;width:1px;height:273px;background:#000"></div>
<div style="left:1873px;top:12px;width:1px;height:273px;background:#000"></div>
<div style="left:27px;top:285px;width:1264px;height:13px;background:#ddebf7"></div>
<div style="left:1292px;top:285px;width:606px;height:13px;background:#c0c0c0"></div>
<div style="left:250px;top:285px;width:1px;height:13px;background:#000"></div>
<div style="left:376px;top:285px;width:1px;height:13px;background:#000"></div>
<div style="left:502px;top:285px;width:1px;height:13px;background:#000"></div>
<div style="left:579px;top:285px;width:1px;height:13px;background:#000"></div>
<div style="left:803px;top:285px;width:1px;height:13px;background:#000"></div>
<div style="left:905px;top:285px;width:1px;height:13px;background:#000"></div>
<div style="left:958px;top:285px;width:1px;height:13px;background:#000"></div>
<div style="left:1011px;top:285px;width:1px;height:13px;background:#000"></div>
<div style="left:1064px;top:285px;width:1px;height:13px;background:#000"></div>
<div style="left:27px;top:298px;width:1264px;height:1px;background:#a0a0a0"></div>
<div style="left:1291px;top:284px;width:607px;height:1px;background:#000"></div>
<div style="left:1291px;top:298px;width:607px;height:1px;background:#000"></div>
<div style="left:1291px;top:284px;width:1px;height:15px;background:#000"></div>
<div style="left:1388px;top:284px;width:1px;height:15px;background:#000"></div>
<div style="left:1485px;top:284px;width:1px;height:15px;background:#000"></div>
<div style="left:1582px;top:284px;width:1px;height:15px;background:#000"></div>
<div style="left:1679px;top:284px;width:1px;height:15px;background:#000"></div>
<div style="left:1776px;top:284px;width:1px;height:15px;background:#000"></div>
<div style="left:1873px;top:284px;width:1px;height:15px;background:#000"></div>
<div style="left:1291px;top:298px;width:607px;height:1px;background:#a0a0a0"></div>
<div style="left:26px;top:298px;width:1266px;height:1px;background:#000"></div>
<div style="left:26px;top:312px;width:1266px;height:1px;background:#000"></div>
<div style="left:26px;top:326px;width:1266px;height:1px;background:#000"></div>
<div style="left:26px;top:354px;width:1266px;height:1px;background:#000"></div>
<div style="left:26px;top:382px;width:1266px;height:1px;background:#000"></div>
<div style="left:26px;top:410px;width:1266px;height:1px;background:#000"></div>
<div style="left:26px;top:424px;width:1266px;height:1px;background:#000"></div>
<div style="left:26px;top:438px;width:1266px;height:1px;background:#000"></div>
<div style="left:26px;top:452px;width:1266px;height:1px;background:#000"></div>
<div style="left:26px;top:466px;width:1266px;height:1px;background:#000"></div>
<div style="left:26px;top:480px;width:1266px;height:1px;background:#000"></div>
<div style="left:26px;top:494px;width:1266px;height:1px;background:#000"></div>
<div style="left:26px;top:508px;width:1266px;height:1px;background:#000"></div>
<div style="left:26px;top:298px;width:1px;height:211px;background:#000"></div>
<div style="left:250px;top:298px;width:1px;height:211px;background:#000"></div>
<div style="left:376px;top:298px;width:1px;height:211px;background:#000"></div>
<div style="left:502px;top:298px;width:1px;height:211px;background:#000"></div>
<div style="left:579px;top:298px;width:1px;height:211px;background:#000"></div>
<div style="left:803px;top:298px;width:1px;height:211px;background:#000"></div>
<div style="left:905px;top:298px;width:1px;height:211px;background:#000"></div>
<div style="left:958px;top:298px;width:1px;height:211px;background:#000"></div>
<div style="left:1011px;top:298px;width:1px;height:211px;background:#000"></div>
<div style="left:1064px;top:298px;width:1px;height:211px;background:#000"></div>
<div style="left:1291px;top:298px;width:1px;height:211px;background:#000"></div>
<div style="left:27px;top:298px;width:1264px;height:1px;background:#a0a0a0"></div>
<div style="left:1292px;top:355px;width:606px;height:125px;background:#c0c0c0"></div>
<div style="left:1292px;top:481px;width:96px;height:27px;background:#ffe699"></div>
<div style="left:1389px;top:481px;width:290px;height:27px;background:#c0c0c0"></div>
<div style="left:1680px;top:481px;width:218px;height:27px;background:#ffe699"></div>
<div style="left:1291px;top:298px;width:607px;height:1px;background:#000"></div>
<div style="left:1291px;top:312px;width:607px;height:1px;background:#000"></div>
<div style="left:1291px;top:326px;width:607px;height:1px;background:#000"></div>
<div style="left:1291px;top:354px;width:607px;height:1px;background:#000"></div>
<div style="left:1291px;top:382px;width:607px;height:1px;background:#000"></div>
<div style="left:1291px;top:410px;width:607px;height:1px;background:#000"></div>
<div style="left:1291px;top:424px;width:607px;height:1px;background:#000"></div>
<div style="left:1291px;top:438px;width:607px;height:1px;background:#000"></div>
<div style="left:1291px;top:452px;width:607px;height:1px;background:#000"></div>
<div style="left:1291px;top:466px;width:607px;height:1px;background:#000"></div>
<div style="left:1291px;top:480px;width:607px;height:1px;background:#000"></div>
<div style="left:1291px;top:494px;width:607px;height:1px;background:#000"></div>
<div style="left:1291px;top:508px;width:607px;height:1px;background:#000"></div>
<div style="left:1291px;top:298px;width:1px;height:211px;background:#000"></div>
<div style="left:1388px;top:298px;width:1px;height:211px;background:#000"></div>
<div style="left:1485px;top:298px;width:1px;height:211px;background:#000"></div>
<div style="left:1582px;top:298px;width:1px;height:211px;background:#000"></div>
<div style="left:1679px;top:298px;width:1px;height:211px;background:#000"></div>
<div style="left:1776px;top:298px;width:1px;height:211px;background:#000"></div>
<div style="left:1873px;top:298px;width:1px;height:211px;background:#000"></div>
<div style="left:1291px;top:298px;width:607px;height:1px;background:#a0a0a0"></div>
<div style="left:27px;top:509px;width:1264px;height:13px;background:#e7e6e6"></div>
<div style="left:26px;top:508px;width:1265px;height:1px;background:#000"></div>
<div style="left:26px;top:522px;width:1265px;height:1px;background:#000"></div>
<div style="left:1011px;top:508px;width:1px;height:15px;background:#000"></div>
<div style="left:1291px;top:508px;width:607px;height:1px;background:#000"></div>
<div style="left:1291px;top:522px;width:607px;height:1px;background:#000"></div>
<div style="left:1291px;top:508px;width:1px;height:15px;background:#000"></div>
<div style="left:1388px;top:508px;width:1px;height:15px;background:#000"></div>
<div style="left:1485px;top:508px;width:1px;height:15px;background:#000"></div>
<div style="left:1582px;top:508px;width:1px;height:15px;background:#000"></div>
<div style="left:1679px;top:508px;width:1px;height:15px;background:#000"></div>
<div style="left:1776px;top:508px;width:1px;height:15px;background:#000"></div>
<div style="left:1873px;top:508px;width:1px;height:15px;background:#000"></div>
<div style="left:27px;top:649px;width:1264px;height:13px;background:#e7e6e6"></div>
<div style="left:26px;top:648px;width:1265px;height:1px;background:#000"></div>
<div style="left:26px;top:662px;width:1265px;height:1px;background:#000"></div>
<div style="left:1011px;top:648px;width:1px;height:15px;background:#000"></div>
<div style="left:1291px;top:648px;width:607px;height:1px;background:#000"></div>
<div style="left:1291px;top:662px;width:607px;height:1px;background:#000"></div>
<div style="left:1291px;top:648px;width:1px;height:15px;background:#000"></div>
<div style="left:1388px;top:648px;width:1px;height:15px;background:#000"></div>
<div style="left:1485px;top:648px;width:1px;height:15px;background:#000"></div>
<div style="left:1582px;top:648px;width:1px;height:15px;background:#000"></div>
<div style="left:1679px;top:648px;width:1px;height:15px;background:#000"></div>
<div style="left:1776px;top:648px;width:1px;height:15px;background:#000"></div>
<div style="left:1873px;top:648px;width:1px;height:15px;background:#000"></div>
<div style="left:27px;top:551px;width:1871px;height:13px;background:#e2efda"></div>
<div style="left:26px;top:550px;width:1872px;height:1px;background:#000"></div>
<div style="left:26px;top:564px;width:1872px;height:1px;background:#000"></div>
<div style="left:26px;top:578px;width:1265px;height:1px;background:#000"></div>
<div style="left:26px;top:592px;width:1265px;height:1px;background:#000"></div>
<div style="left:26px;top:606px;width:1265px;height:1px;background:#000"></div>
<div style="left:26px;top:620px;width:1265px;height:1px;background:#000"></div>
<div style="left:26px;top:634px;width:1265px;height:1px;background:#000"></div>
<div style="left:26px;top:648px;width:1265px;height:1px;background:#000"></div>
<div style="left:1291px;top:564px;width:607px;height:1px;background:#000"></div>
<div style="left:1291px;top:578px;width:607px;height:1px;background:#000"></div>
<div style="left:1291px;top:592px;width:607px;height:1px;background:#000"></div>
<div style="left:1291px;top:606px;width:607px;height:1px;background:#000"></div>
<div style="left:1291px;top:620px;width:607px;height:1px;background:#000"></div>
<div style="left:1291px;top:634px;width:607px;height:1px;background:#000"></div>
<div style="left:1291px;top:648px;width:607px;height:1px;background:#000"></div>
<div style="left:1291px;top:564px;width:1px;height:85px;background:#000"></div>
<div style="left:1388px;top:564px;width:1px;height:85px;background:#000"></div>
<div style="left:1485px;top:564px;width:1px;height:85px;background:#000"></div>
<div style="left:1582px;top:564px;width:1px;height:85px;background:#000"></div>
<div style="left:1679px;top:564px;width:1px;height:85px;background:#000"></div>
<div style="left:1776px;top:564px;width:1px;height:85px;background:#000"></div>
<div style="left:1873px;top:564px;width:1px;height:85px;background:#000"></div>
<div style="left:1389px;top:593px;width:290px;height:55px;background:#c0c0c0"></div>
<div style="left:1292px;top:593px;width:96px;height:41px;background:#c0c0c0"></div>
<div style="left:1680px;top:593px;width:218px;height:41px;background:#c0c0c0"></div>
<div style="left:1291px;top:564px;width:607px;height:1px;background:#000"></div>
<div style="left:1291px;top:578px;width:607px;height:1px;background:#000"></div>
<div style="left:1291px;top:592px;width:607px;height:1px;background:#000"></div>
<div style="left:1291px;top:606px;width:607px;height:1px;background:#000"></div>
<div style="left:1291px;top:620px;width:607px;height:1px;background:#000"></div>
<div style="left:1291px;top:634px;width:607px;height:1px;background:#000"></div>
<div style="left:1291px;top:648px;width:607px;height:1px;background:#000"></div>
<div style="left:1291px;top:564px;width:1px;height:85px;background:#000"></div>
<div style="left:1388px;top:564px;width:1px;height:85px;background:#000"></div>
<div style="left:1485px;top:564px;width:1px;height:85px;background:#000"></div>
<div style="left:1582px;top:564px;width:1px;height:85px;background:#000"></div>
<div style="left:1679px;top:564px;width:1px;height:85px;background:#000"></div>
<div style="left:1776px;top:564px;width:1px;height:85px;background:#000"></div>
<div style="left:1873px;top:564px;width:1px;height:85px;background:#000"></div>
<div style="left:27px;top:691px;width:1264px;height:13px;background:#e7e6e6"></div>
<div style="left:1292px;top:691px;width:606px;height:13px;background:#c0c0c0"></div>
<div style="left:26px;top:690px;width:1872px;height:1px;background:#000"></div>
<div style="left:26px;top:704px;width:1872px;height:1px;background:#000"></div>
<div style="left:1291px;top:690px;width:607px;height:1px;background:#000"></div>
<div style="left:1291px;top:704px;width:607px;height:1px;background:#000"></div>
<div style="left:1291px;top:690px;width:1px;height:15px;background:#000"></div>
<div style="left:1388px;top:690px;width:1px;height:15px;background:#000"></div>
<div style="left:1485px;top:690px;width:1px;height:15px;background:#000"></div>
<div style="left:1582px;top:690px;width:1px;height:15px;background:#000"></div>
<div style="left:1679px;top:690px;width:1px;height:15px;background:#000"></div>
<div style="left:1776px;top:690px;width:1px;height:15px;background:#000"></div>
<div style="left:1873px;top:690px;width:1px;height:15px;background:#000"></div>
<div class="c" style="left:1294.5px;top:12.300000000000011px;font-size:10.5px;font-weight:bold;letter-spacing:0.45px">Expenses</div>
<div class="c" style="left:1294.5px;top:40.30000000000001px;font-size:10.5px;font-weight:bold;letter-spacing:0.45px">Purchased</div>
<div class="c" style="left:1294.5px;top:54.30000000000001px;font-size:10.5px;font-weight:bold;letter-spacing:0.45px">Electricity</div>
<div class="c" style="left:1294.5px;top:121.30000000000001px;font-size:10.5px;font-weight:bold;letter-spacing:0.45px">EXPS_ELEC_VA</div>
<div class="c" style="left:1294.5px;top:135.3px;font-size:10.5px;font-weight:bold;letter-spacing:0.45px">L</div>
<div class="c" style="left:1294.5px;top:148.3px;font-size:10.5px;font-weight:bold;letter-spacing:0.45px">What was the</div>
<div class="c" style="left:1294.5px;top:162.3px;font-size:10.5px;font-weight:bold;letter-spacing:0.45px">amount paid for</div>
<div class="c" style="left:1294.5px;top:176.3px;font-size:10.5px;font-weight:bold;letter-spacing:0.45px">purchased</div>
<div class="c" style="left:1294.5px;top:190.3px;font-size:10.5px;font-weight:bold;letter-spacing:0.45px">electricity in</div>
<div class="c" style="left:1294.5px;top:204.3px;font-size:10.5px;font-weight:bold;letter-spacing:0.45px">2022?</div>
<div class="c" style="left:1294.5px;top:285px;color:#0563c1;text-decoration:underline;font-size:10px">Instructions</div>
<div class="c" style="left:1391.5px;top:12.300000000000011px;font-size:10.5px;font-weight:bold;letter-spacing:0.45px">Expenses</div>
<div class="c" style="left:1391.5px;top:40.30000000000001px;font-size:10.5px;font-weight:bold;letter-spacing:0.45px">Quantity of</div>
<div class="c" style="left:1391.5px;top:54.30000000000001px;font-size:10.5px;font-weight:bold;letter-spacing:0.45px">Purchased</div>
<div class="c" style="left:1391.5px;top:68.30000000000001px;font-size:10.5px;font-weight:bold;letter-spacing:0.45px">Electricity</div>
<div class="c" style="left:1391.5px;top:121.30000000000001px;font-size:10.5px;font-weight:bold;letter-spacing:0.45px">ELEC_PRCH_K</div>
<div class="c" style="left:1391.5px;top:135.3px;font-size:10.5px;font-weight:bold;letter-spacing:0.45px">WH_NUM</div>
<div class="c" style="left:1391.5px;top:148.3px;font-size:10.5px;font-weight:bold;letter-spacing:0.45px">What was the</div>
<div class="c" style="left:1391.5px;top:162.3px;font-size:10.5px;font-weight:bold;letter-spacing:0.45px">quantity of</div>
<div class="c" style="left:1391.5px;top:176.3px;font-size:10.5px;font-weight:bold;letter-spacing:0.45px">purchased</div>
<div class="c" style="left:1391.5px;top:190.3px;font-size:10.5px;font-weight:bold;letter-spacing:0.45px">electricity in</div>
<div class="c" style="left:1391.5px;top:204.3px;font-size:10.5px;font-weight:bold;letter-spacing:0.45px">2022?</div>
<div class="c" style="left:1391.5px;top:285px;color:#0563c1;text-decoration:underline;font-size:10px">Instructions</div>
<div class="c" style="left:1488.5px;top:12.300000000000011px;font-size:10.5px;font-weight:bold;letter-spacing:0.45px">Expenses</div>
<div class="c" style="left:1488.5px;top:40.30000000000001px;font-size:10.5px;font-weight:bold;letter-spacing:0.45px">Quantity of</div>
<div class="c" style="left:1488.5px;top:54.30000000000001px;font-size:10.5px;font-weight:bold;letter-spacing:0.45px">Electricity Sold</div>
<div class="c" style="left:1488.5px;top:68.30000000000001px;font-size:10.5px;font-weight:bold;letter-spacing:0.45px">or Transferred</div>
<div class="c" style="left:1488.5px;top:82.30000000000001px;font-size:10.5px;font-weight:bold;letter-spacing:0.45px">to Other</div>
<div class="c" style="left:1488.5px;top:96.30000000000001px;font-size:10.5px;font-weight:bold;letter-spacing:0.45px">Establishments</div>
<div class="c" style="left:1488.5px;top:121.30000000000001px;font-size:10.5px;font-weight:bold;letter-spacing:0.45px">ELEC_SOLD_K</div>
<div class="c" style="left:1488.5px;top:135.3px;font-size:10.5px;font-weight:bold;letter-spacing:0.45px">WH_NUM</div>
<div class="c" style="left:1488.5px;top:148.3px;font-size:10.5px;font-weight:bold;letter-spacing:0.45px">What was the</div>
<div class="c" style="left:1488.5px;top:162.3px;font-size:10.5px;font-weight:bold;letter-spacing:0.45px">quantity of</div>
<div class="c" style="left:1488.5px;top:176.3px;font-size:10.5px;font-weight:bold;letter-spacing:0.45px">electricity sold</div>
<div class="c" style="left:1488.5px;top:190.3px;font-size:10.5px;font-weight:bold;letter-spacing:0.45px">or transferred to</div>
<div class="c" style="left:1488.5px;top:204.3px;font-size:10.5px;font-weight:bold;letter-spacing:0.45px">other</div>
<div class="c" style="left:1488.5px;top:218.3px;font-size:10.5px;font-weight:bold;letter-spacing:0.45px">establishments</div>
<div class="c" style="left:1488.5px;top:232.3px;font-size:10.5px;font-weight:bold;letter-spacing:0.45px">in 2022?</div>
<div class="c" style="left:1488.5px;top:285px;color:#0563c1;text-decoration:underline;font-size:10px">Instructions</div>
<div class="c" style="left:1585.5px;top:12.300000000000011px;font-size:10.5px;font-weight:bold;letter-spacing:0.45px">Expenses</div>
<div class="c" style="left:1585.5px;top:40.30000000000001px;font-size:10.5px;font-weight:bold;letter-spacing:0.45px">Quantity of</div>
<div class="c" style="left:1585.5px;top:54.30000000000001px;font-size:10.5px;font-weight:bold;letter-spacing:0.45px">Generated</div>
<div class="c" style="left:1585.5px;top:68.30000000000001px;font-size:10.5px;font-weight:bold;letter-spacing:0.45px">Electricity</div>
<div class="c" style="left:1585.5px;top:121.30000000000001px;font-size:10.5px;font-weight:bold;letter-spacing:0.45px">ELEC_GEN_KW</div>
<div class="c" style="left:1585.5px;top:135.3px;font-size:10.5px;font-weight:bold;letter-spacing:0.45px">H_NUM</div>
<div class="c" style="left:1585.5px;top:148.3px;font-size:10.5px;font-weight:bold;letter-spacing:0.45px">What was the</div>
<div class="c" style="left:1585.5px;top:162.3px;font-size:10.5px;font-weight:bold;letter-spacing:0.45px">quantity of</div>
<div class="c" style="left:1585.5px;top:176.3px;font-size:10.5px;font-weight:bold;letter-spacing:0.45px">generated</div>
<div class="c" style="left:1585.5px;top:190.3px;font-size:10.5px;font-weight:bold;letter-spacing:0.45px">electricity in</div>
<div class="c" style="left:1585.5px;top:204.3px;font-size:10.5px;font-weight:bold;letter-spacing:0.45px">2022?</div>
<div class="c" style="left:1585.5px;top:285px;color:#0563c1;text-decoration:underline;font-size:10px">Instructions</div>
<div class="c" style="left:1682.5px;top:12.300000000000011px;font-size:10.5px;font-weight:bold;letter-spacing:0.45px">Expenses</div>
<div class="c" style="left:1682.5px;top:40.30000000000001px;font-size:10.5px;font-weight:bold;letter-spacing:0.45px">Purchased</div>
<div class="c" style="left:1682.5px;top:54.30000000000001px;font-size:10.5px;font-weight:bold;letter-spacing:0.45px">Fuels (Except</div>
<div class="c" style="left:1682.5px;top:68.30000000000001px;font-size:10.5px;font-weight:bold;letter-spacing:0.45px">Motor Fuels)</div>
<div class="c" style="left:1682.5px;top:121.30000000000001px;font-size:10.5px;font-weight:bold;letter-spacing:0.45px">EXPS_FUEL_VA</div>
<div class="c" style="left:1682.5px;top:135.3px;font-size:10.5px;font-weight:bold;letter-spacing:0.45px">L</div>
<div class="c" style="left:1682.5px;top:148.3px;font-size:10.5px;font-weight:bold;letter-spacing:0.45px">What was the</div>
<div class="c" style="left:1682.5px;top:162.3px;font-size:10.5px;font-weight:bold;letter-spacing:0.45px">amount paid for</div>
<div class="c" style="left:1682.5px;top:176.3px;font-size:10.5px;font-weight:bold;letter-spacing:0.45px">purchased fuels</div>
<div class="c" style="left:1682.5px;top:190.3px;font-size:10.5px;font-weight:bold;letter-spacing:0.45px">(except motor</div>
<div class="c" style="left:1682.5px;top:204.3px;font-size:10.5px;font-weight:bold;letter-spacing:0.45px">fuels) in 2022?</div>
<div class="c" style="left:1682.5px;top:285px;color:#0563c1;text-decoration:underline;font-size:10px">Instructions</div>
<div class="c" style="left:1779.5px;top:12.300000000000011px;font-size:10.5px;font-weight:bold;letter-spacing:0.45px">Expenses</div>
<div class="c" style="left:1779.5px;top:40.30000000000001px;font-size:10.5px;font-weight:bold;letter-spacing:0.45px">Water, Sewer,</div>
<div class="c" style="left:1779.5px;top:54.30000000000001px;font-size:10.5px;font-weight:bold;letter-spacing:0.45px">Refuse</div>
<div class="c" style="left:1779.5px;top:68.30000000000001px;font-size:10.5px;font-weight:bold;letter-spacing:0.45px">Removal, and</div>
<div class="c" style="left:1779.5px;top:82.30000000000001px;font-size:10.5px;font-weight:bold;letter-spacing:0.45px">Other Utility</div>
<div class="c" style="left:1779.5px;top:96.30000000000001px;font-size:10.5px;font-weight:bold;letter-spacing:0.45px">Payments</div>
<div class="c" style="left:1779.5px;top:121.30000000000001px;font-size:10.5px;font-weight:bold;letter-spacing:0.45px">EXPS_REFUSE_</div>
<div class="c" style="left:1779.5px;top:135.3px;font-size:10.5px;font-weight:bold;letter-spacing:0.45px">VAL</div>
<div class="c" style="left:1779.5px;top:148.3px;font-size:10.5px;font-weight:bold;letter-spacing:0.45px">What was the</div>
<div class="c" style="left:1779.5px;top:162.3px;font-size:10.5px;font-weight:bold;letter-spacing:0.45px">amount paid for</div>
<div class="c" style="left:1779.5px;top:176.3px;font-size:10.5px;font-weight:bold;letter-spacing:0.45px">water, sewer,</div>
<div class="c" style="left:1779.5px;top:190.3px;font-size:10.5px;font-weight:bold;letter-spacing:0.45px">refuse removal,</div>
<div class="c" style="left:1779.5px;top:204.3px;font-size:10.5px;font-weight:bold;letter-spacing:0.45px">and other utility</div>
<div class="c" style="left:1779.5px;top:218.3px;font-size:10.5px;font-weight:bold;letter-spacing:0.45px">payments in</div>
<div class="c" style="left:1779.5px;top:232.3px;font-size:10.5px;font-weight:bold;letter-spacing:0.45px">2022?</div>
<div class="c" style="left:1779.5px;top:285px;color:#0563c1;text-decoration:underline;font-size:10px">Instructions</div>
<div class="c" style="left:1876.5px;top:12.300000000000011px;font-size:10.5px;font-weight:bold;letter-spacing:0.45px">Expenses</div>
<div class="c" style="left:1876.5px;top:40.30000000000001px;font-size:10.5px;font-weight:bold;letter-spacing:0.45px">Government</div>
<div class="c" style="left:1876.5px;top:54.30000000000001px;font-size:10.5px;font-weight:bold;letter-spacing:0.45px">Taxes and</div>
<div class="c" style="left:1876.5px;top:68.30000000000001px;font-size:10.5px;font-weight:bold;letter-spacing:0.45px">Licenses</div>
<div class="c" style="left:1876.5px;top:121.30000000000001px;font-size:10.5px;font-weight:bold;letter-spacing:0.45px">EXPS_TAX_VA</div>
<div class="c" style="left:1876.5px;top:135.3px;font-size:10.5px;font-weight:bold;letter-spacing:0.45px">L</div>
<div class="c" style="left:1876.5px;top:148.3px;font-size:10.5px;font-weight:bold;letter-spacing:0.45px">What was the</div>
<div class="c" style="left:1876.5px;top:162.3px;font-size:10.5px;font-weight:bold;letter-spacing:0.45px">amount</div>
<div class="c" style="left:1876.5px;top:176.3px;font-size:10.5px;font-weight:bold;letter-spacing:0.45px">government</div>
<div class="c" style="left:1876.5px;top:190.3px;font-size:10.5px;font-weight:bold;letter-spacing:0.45px">taxes and</div>
<div class="c" style="left:1876.5px;top:204.3px;font-size:10.5px;font-weight:bold;letter-spacing:0.45px">licenses in</div>
<div class="c" style="left:1876.5px;top:218.3px;font-size:10.5px;font-weight:bold;letter-spacing:0.45px">2022?</div>
<div class="c" style="left:1876.5px;top:285px;color:#0563c1;text-decoration:underline;font-size:10px">Instructions</div>
<div class="c" style="left:29.5px;top:285px;font-size:10px;color:#1a1a2e;margin-top:1px">Name 1</div>
<div class="c" style="left:253.5px;top:285px;font-size:10px;color:#1a1a2e;margin-top:1px">Name 2</div>
<div class="c" style="left:505.5px;top:285px;font-size:10px;color:#1a1a2e;margin-top:1px">EIN</div>
<div class="c" style="left:582.5px;top:285px;font-size:10px;color:#1a1a2e;margin-top:1px">Street</div>
<div class="c" style="left:806.5px;top:285px;font-size:10px;color:#1a1a2e;margin-top:1px">City</div>
<div class="c" style="left:908.5px;top:285px;font-size:10px;color:#1a1a2e;margin-top:1px">State</div>
<div class="c" style="left:961.5px;top:285px;font-size:10px;color:#1a1a2e;margin-top:1px">Zip</div>
<div class="c" style="left:1014.5px;top:285px;font-size:10px;color:#1a1a2e;margin-top:1px">NAICS</div>
<div class="c" style="left:1067.5px;top:285px;font-size:10px;color:#1a1a2e;margin-top:1px">Industry</div>
<div style="left:377px;top:285px;width:124px;height:13px;overflow:hidden"><div class="c" style="left:2.5px;top:1px;letter-spacing:0.4px;font-size:10px;color:#1a1a2e">Store/Plant/Location Identifier</div></div>
<div class="c" style="left:29.5px;top:299px;font-size:10px;letter-spacing:-0.1px">CENSUS CAT COMPANY</div>
<div class="c" style="left:502px;top:299px;width:75px;text-align:right;font-size:10px;letter-spacing:-0.1px">123456789</div>
<div class="c" style="left:582.5px;top:299px;font-size:10px;letter-spacing:-0.1px">1001 CAT FOOD WAY</div>
<div class="c" style="left:806.5px;top:299px;font-size:10px;letter-spacing:-0.1px">ELLWOOD CITY</div>
<div class="c" style="left:908.5px;top:299px;font-size:10px;letter-spacing:-0.1px">PA</div>
<div class="c" style="left:961.5px;top:299px;font-size:10px;letter-spacing:-0.1px">00016117</div>
<div class="c" style="left:1014.5px;top:299px;font-size:10px;letter-spacing:-0.1px">311111</div>
<div class="c" style="left:1067.5px;top:299px;font-size:10.3px;letter-spacing:-0.1px">Dog and Cat Food Manufacturing</div>
<div class="c" style="left:29.5px;top:313px;font-size:10px;letter-spacing:-0.1px">CENSUS CAT COMPANY</div>
<div class="c" style="left:502px;top:313px;width:75px;text-align:right;font-size:10px;letter-spacing:-0.1px">123456789</div>
<div class="c" style="left:582.5px;top:313px;font-size:10px;letter-spacing:-0.1px">1002 CAT FOOD WAY</div>
<div class="c" style="left:806.5px;top:313px;font-size:10px;letter-spacing:-0.1px">BEAVER FALLS</div>
<div class="c" style="left:908.5px;top:313px;font-size:10px;letter-spacing:-0.1px">PA</div>
<div class="c" style="left:961.5px;top:313px;font-size:10px;letter-spacing:-0.1px">00015010</div>
<div class="c" style="left:1014.5px;top:313px;font-size:10px;letter-spacing:-0.1px">311111</div>
<div class="c" style="left:1067.5px;top:313px;font-size:10.3px;letter-spacing:-0.1px">Dog and Cat Food Manufacturing</div>
<div class="c" style="left:29.5px;top:341px;font-size:10px;letter-spacing:-0.1px">CENSUS CAT COMPANY</div>
<div class="c" style="left:502px;top:341px;width:75px;text-align:right;font-size:10px;letter-spacing:-0.1px">123456789</div>
<div class="c" style="left:582.5px;top:341px;font-size:10px;letter-spacing:-0.1px">1003 CAT LITTER WAY</div>
<div class="c" style="left:806.5px;top:341px;font-size:10px;letter-spacing:-0.1px">FOMBELL</div>
<div class="c" style="left:908.5px;top:341px;font-size:10px;letter-spacing:-0.1px">PA</div>
<div class="c" style="left:961.5px;top:341px;font-size:10px;letter-spacing:-0.1px">00016117</div>
<div class="c" style="left:1014.5px;top:341px;font-size:10px;letter-spacing:-0.1px">325998</div>
<div class="c" style="left:1067.5px;top:327px;font-size:10.3px;letter-spacing:-0.1px">All Other Miscellaneous Chemical Product and</div>
<div class="c" style="left:1067.5px;top:341px;font-size:10.3px;letter-spacing:-0.1px">Preparation Manufacturing</div>
<div class="c" style="left:29.5px;top:369px;font-size:10px;letter-spacing:-0.1px">CENSUS CAT COMPANY WHOLESALES</div>
<div class="c" style="left:502px;top:369px;width:75px;text-align:right;font-size:10px;letter-spacing:-0.1px">123456789</div>
<div class="c" style="left:582.5px;top:369px;font-size:10px;letter-spacing:-0.1px">1004 CAT FOOD ROAD</div>
<div class="c" style="left:806.5px;top:369px;font-size:10px;letter-spacing:-0.1px">NEW BRIGHTON</div>
<div class="c" style="left:908.5px;top:369px;font-size:10px;letter-spacing:-0.1px">PA</div>
<div class="c" style="left:961.5px;top:369px;font-size:10px;letter-spacing:-0.1px">00016117</div>
<div class="c" style="left:1014.5px;top:369px;font-size:10px;letter-spacing:-0.1px">424490</div>
<div class="c" style="left:1067.5px;top:355px;font-size:10.3px;letter-spacing:-0.1px">Other Grocery and Related Products Merchant</div>
<div class="c" style="left:1067.5px;top:369px;font-size:10.3px;letter-spacing:-0.1px">Wholesalers</div>
<div class="c" style="left:29.5px;top:397px;font-size:10px;letter-spacing:-0.1px">CENSUS CAT COMPANY WHOLESALES</div>
<div class="c" style="left:502px;top:397px;width:75px;text-align:right;font-size:10px;letter-spacing:-0.1px">123456789</div>
<div class="c" style="left:582.5px;top:397px;font-size:10px;letter-spacing:-0.1px">1005 CAT FOOD ROAD</div>
<div class="c" style="left:806.5px;top:397px;font-size:10px;letter-spacing:-0.1px">NEW BRIGHTON</div>
<div class="c" style="left:908.5px;top:397px;font-size:10px;letter-spacing:-0.1px">PA</div>
<div class="c" style="left:961.5px;top:397px;font-size:10px;letter-spacing:-0.1px">00016117</div>
<div class="c" style="left:1014.5px;top:397px;font-size:10px;letter-spacing:-0.1px">424990</div>
<div class="c" style="left:1067.5px;top:383px;font-size:10.3px;letter-spacing:-0.1px">Other Miscellaneous Nondurable Goods</div>
<div class="c" style="left:1067.5px;top:397px;font-size:10.3px;letter-spacing:-0.1px">Merchant Wholesalers</div>
<div class="c" style="left:29.5px;top:411px;font-size:10px;letter-spacing:-0.1px">CENSUS CAT COMPANY</div>
<div class="c" style="left:502px;top:411px;width:75px;text-align:right;font-size:10px;letter-spacing:-0.1px">123456789</div>
<div class="c" style="left:582.5px;top:411px;font-size:10px;letter-spacing:-0.1px">1006 CAT FOOD ROAD</div>
<div class="c" style="left:806.5px;top:411px;font-size:10px;letter-spacing:-0.1px">CRANBERRY</div>
<div class="c" style="left:908.5px;top:411px;font-size:10px;letter-spacing:-0.1px">PA</div>
<div class="c" style="left:961.5px;top:411px;font-size:10px;letter-spacing:-0.1px">00015010</div>
<div class="c" style="left:1014.5px;top:411px;font-size:10px;letter-spacing:-0.1px">453910</div>
<div class="c" style="left:1067.5px;top:411px;font-size:10.3px;letter-spacing:-0.1px">Pet and Pet Supplies Stores</div>
<div class="c" style="left:29.5px;top:425px;font-size:10px;letter-spacing:-0.1px">CENSUS CAT COMPANY</div>
<div class="c" style="left:502px;top:425px;width:75px;text-align:right;font-size:10px;letter-spacing:-0.1px">123456789</div>
<div class="c" style="left:582.5px;top:425px;font-size:10px;letter-spacing:-0.1px">1007 CAT FOOD ROAD</div>
<div class="c" style="left:806.5px;top:425px;font-size:10px;letter-spacing:-0.1px">YOUNGSTOWN</div>
<div class="c" style="left:908.5px;top:425px;font-size:10px;letter-spacing:-0.1px">OH</div>
<div class="c" style="left:961.5px;top:425px;font-size:10px;letter-spacing:-0.1px">00017257</div>
<div class="c" style="left:1014.5px;top:425px;font-size:10px;letter-spacing:-0.1px">453910</div>
<div class="c" style="left:1067.5px;top:425px;font-size:10.3px;letter-spacing:-0.1px">Pet and Pet Supplies Stores</div>
<div class="c" style="left:29.5px;top:439px;font-size:10px;letter-spacing:-0.1px">CENSUS CAT COMPANY</div>
<div class="c" style="left:502px;top:439px;width:75px;text-align:right;font-size:10px;letter-spacing:-0.1px">123456789</div>
<div class="c" style="left:582.5px;top:439px;font-size:10px;letter-spacing:-0.1px">1008 CAT FOOD ROAD</div>
<div class="c" style="left:806.5px;top:439px;font-size:10px;letter-spacing:-0.1px">BEAVER FALLS</div>
<div class="c" style="left:908.5px;top:439px;font-size:10px;letter-spacing:-0.1px">PA</div>
<div class="c" style="left:961.5px;top:439px;font-size:10px;letter-spacing:-0.1px">00015010</div>
<div class="c" style="left:1014.5px;top:439px;font-size:10px;letter-spacing:-0.1px">453910</div>
<div class="c" style="left:1067.5px;top:439px;font-size:10.3px;letter-spacing:-0.1px">Pet and Pet Supplies Stores</div>
<div class="c" style="left:29.5px;top:453px;font-size:10px;letter-spacing:-0.1px">CENSUS CAT COMPANY</div>
<div class="c" style="left:502px;top:453px;width:75px;text-align:right;font-size:10px;letter-spacing:-0.1px">123456789</div>
<div class="c" style="left:582.5px;top:453px;font-size:10px;letter-spacing:-0.1px">1009 CAT FOOD ROAD</div>
<div class="c" style="left:806.5px;top:453px;font-size:10px;letter-spacing:-0.1px">FOMBELL</div>
<div class="c" style="left:908.5px;top:453px;font-size:10px;letter-spacing:-0.1px">PA</div>
<div class="c" style="left:961.5px;top:453px;font-size:10px;letter-spacing:-0.1px">00016117</div>
<div class="c" style="left:1014.5px;top:453px;font-size:10px;letter-spacing:-0.1px">453910</div>
<div class="c" style="left:1067.5px;top:453px;font-size:10.3px;letter-spacing:-0.1px">Pet and Pet Supplies Stores</div>
<div class="c" style="left:29.5px;top:467px;font-size:10px;letter-spacing:-0.1px">CENSUS CAT COMPANY</div>
<div class="c" style="left:502px;top:467px;width:75px;text-align:right;font-size:10px;letter-spacing:-0.1px">123456789</div>
<div class="c" style="left:582.5px;top:467px;font-size:10px;letter-spacing:-0.1px">1010 CAT FOOD ROAD</div>
<div class="c" style="left:806.5px;top:467px;font-size:10px;letter-spacing:-0.1px">ELLWOOD CITY</div>
<div class="c" style="left:908.5px;top:467px;font-size:10px;letter-spacing:-0.1px">PA</div>
<div class="c" style="left:961.5px;top:467px;font-size:10px;letter-spacing:-0.1px">00016117</div>
<div class="c" style="left:1014.5px;top:467px;font-size:10px;letter-spacing:-0.1px">453910</div>
<div class="c" style="left:1067.5px;top:467px;font-size:10.3px;letter-spacing:-0.1px">Pet and Pet Supplies Stores</div>
<div class="c" style="left:29.5px;top:481px;font-size:10px;letter-spacing:-0.1px">CENSUS CAT GROOMING</div>
<div class="c" style="left:502px;top:481px;width:75px;text-align:right;font-size:10px;letter-spacing:-0.1px">123456789</div>
<div class="c" style="left:582.5px;top:481px;font-size:10px;letter-spacing:-0.1px">1011 FUZZY KITTEN ROAD</div>
<div class="c" style="left:806.5px;top:481px;font-size:10px;letter-spacing:-0.1px">NEW BRIGHTON</div>
<div class="c" style="left:908.5px;top:481px;font-size:10px;letter-spacing:-0.1px">PA</div>
<div class="c" style="left:961.5px;top:481px;font-size:10px;letter-spacing:-0.1px">00016117</div>
<div class="c" style="left:1014.5px;top:481px;font-size:10px;letter-spacing:-0.1px">812910</div>
<div class="c" style="left:1067.5px;top:481px;font-size:10.3px;letter-spacing:-0.1px">Pet Care (except Veterinary) Services</div>
<div class="c" style="left:29.5px;top:495px;font-size:10px;letter-spacing:-0.1px">CENSUS CAT SHELTER</div>
<div class="c" style="left:502px;top:495px;width:75px;text-align:right;font-size:10px;letter-spacing:-0.1px">123456789</div>
<div class="c" style="left:582.5px;top:495px;font-size:10px;letter-spacing:-0.1px">1012 CAT ADOPTION LANE</div>
<div class="c" style="left:806.5px;top:495px;font-size:10px;letter-spacing:-0.1px">MARS</div>
<div class="c" style="left:908.5px;top:495px;font-size:10px;letter-spacing:-0.1px">PA</div>
<div class="c" style="left:961.5px;top:495px;font-size:10px;letter-spacing:-0.1px">00017257</div>
<div class="c" style="left:1014.5px;top:495px;font-size:10px;letter-spacing:-0.1px">812910</div>
<div class="c" style="left:1067.5px;top:495px;font-size:10.3px;letter-spacing:-0.1px">Pet Care (except Veterinary) Services</div>
<div class="c" style="left:29.5px;top:509px;font-size:10.5px;font-weight:bold;letter-spacing:0.35px;margin-top:-1px">Showing: 12 of 12</div>
<div class="c" style="left:1064px;top:509px;width:225px;text-align:right;font-size:10.5px;font-weight:bold;letter-spacing:0.35px;margin-top:-1px">Total</div>
<div class="c" style="left:29.5px;top:551px;font-size:10.5px;font-weight:bold;letter-spacing:0.35px;margin-top:-1px">Industry</div>
<div class="c" style="left:29.5px;top:565px;font-size:10.3px;letter-spacing:-0.1px">Dog and Cat Food Manufacturing</div>
<div class="c" style="left:29.5px;top:579px;font-size:10.3px;letter-spacing:-0.1px">All Other Miscellaneous Chemical Product and Preparation Manufacturing</div>
<div class="c" style="left:29.5px;top:593px;font-size:10.3px;letter-spacing:-0.1px">Other Grocery and Related Products Merchant Wholesalers</div>
<div class="c" style="left:29.5px;top:607px;font-size:10.3px;letter-spacing:-0.1px">Other Miscellaneous Nondurable Goods Merchant Wholesalers</div>
<div class="c" style="left:29.5px;top:621px;font-size:10.3px;letter-spacing:-0.1px">Pet and Pet Supplies Stores</div>
<div class="c" style="left:29.5px;top:635px;font-size:10.3px;letter-spacing:-0.1px">Pet Care (except Veterinary) Services</div>
<div class="c" style="left:29.5px;top:649px;font-size:10.5px;font-weight:bold;letter-spacing:0.35px;margin-top:-1px">Showing: 6 of 6</div>
<div class="c" style="left:1064px;top:649px;width:225px;text-align:right;font-size:10.5px;font-weight:bold;letter-spacing:0.35px;margin-top:-1px">Total</div>
<div class="c" style="left:29.5px;top:691px;font-size:10.5px;font-weight:bold;letter-spacing:0.35px;margin-top:-1px">Previously reported company totals</div>
<div class="c" style="left:1291px;top:509px;width:95px;text-align:right;font-size:10px;letter-spacing:-0.1px">0</div>
<div class="c" style="left:1388px;top:509px;width:95px;text-align:right;font-size:10px;letter-spacing:-0.1px">0</div>
<div class="c" style="left:1485px;top:509px;width:95px;text-align:right;font-size:10px;letter-spacing:-0.1px">0</div>
<div class="c" style="left:1582px;top:509px;width:95px;text-align:right;font-size:10px;letter-spacing:-0.1px">0</div>
<div class="c" style="left:1679px;top:509px;width:95px;text-align:right;font-size:10px;letter-spacing:-0.1px">0</div>
<div class="c" style="left:1776px;top:509px;width:95px;text-align:right;font-size:10px;letter-spacing:-0.1px">0</div>
<div class="c" style="left:1291px;top:565px;width:95px;text-align:right;font-size:10px;letter-spacing:-0.1px">0</div>
<div class="c" style="left:1388px;top:565px;width:95px;text-align:right;font-size:10px;letter-spacing:-0.1px">0</div>
<div class="c" style="left:1485px;top:565px;width:95px;text-align:right;font-size:10px;letter-spacing:-0.1px">0</div>
<div class="c" style="left:1582px;top:565px;width:95px;text-align:right;font-size:10px;letter-spacing:-0.1px">0</div>
<div class="c" style="left:1679px;top:565px;width:95px;text-align:right;font-size:10px;letter-spacing:-0.1px">0</div>
<div class="c" style="left:1776px;top:565px;width:95px;text-align:right;font-size:10px;letter-spacing:-0.1px">0</div>
<div class="c" style="left:1291px;top:579px;width:95px;text-align:right;font-size:10px;letter-spacing:-0.1px">0</div>
<div class="c" style="left:1388px;top:579px;width:95px;text-align:right;font-size:10px;letter-spacing:-0.1px">0</div>
<div class="c" style="left:1485px;top:579px;width:95px;text-align:right;font-size:10px;letter-spacing:-0.1px">0</div>
<div class="c" style="left:1582px;top:579px;width:95px;text-align:right;font-size:10px;letter-spacing:-0.1px">0</div>
<div class="c" style="left:1679px;top:579px;width:95px;text-align:right;font-size:10px;letter-spacing:-0.1px">0</div>
<div class="c" style="left:1776px;top:579px;width:95px;text-align:right;font-size:10px;letter-spacing:-0.1px">0</div>
<div class="c" style="left:1291px;top:649px;width:95px;text-align:right;font-size:10px;letter-spacing:-0.1px">0</div>
<div class="c" style="left:1388px;top:649px;width:95px;text-align:right;font-size:10px;letter-spacing:-0.1px">0</div>
<div class="c" style="left:1485px;top:649px;width:95px;text-align:right;font-size:10px;letter-spacing:-0.1px">0</div>
<div class="c" style="left:1582px;top:649px;width:95px;text-align:right;font-size:10px;letter-spacing:-0.1px">0</div>
<div class="c" style="left:1679px;top:649px;width:95px;text-align:right;font-size:10px;letter-spacing:-0.1px">0</div>
<div class="c" style="left:1776px;top:649px;width:95px;text-align:right;font-size:10px;letter-spacing:-0.1px">0</div>
<div class="c" style="left:1291px;top:635px;width:95px;text-align:right;font-size:10px;letter-spacing:-0.1px">0</div>
<div class="c" style="left:1679px;top:635px;width:95px;text-align:right;font-size:10px;letter-spacing:-0.1px">0</div>
<div class="c" style="left:1776px;top:635px;width:95px;text-align:right;font-size:10px;letter-spacing:-0.1px">0</div>
<div style="left:27px;top:13px;width:1263px;height:1px;background:#fff"></div>
<div style="left:27px;top:13px;width:1px;height:271px;background:#fff"></div>
<div style="left:27px;top:284px;width:1261px;height:2px;background:#217346"></div>
<div style="left:27px;top:283px;width:1261px;height:1px;background:#fff"></div>
<div style="left:1288px;top:281px;width:3px;height:7px;background:#fff"></div>
<div style="left:1289px;top:282px;width:2px;height:5px;background:#217346"></div>
<div style="left:1290px;top:13px;width:1px;height:268px;background:#fff"></div>
<div style="left:1291px;top:0px;width:1px;height:775px;background:#a6a6a6"></div>
<div style="left:0;top:0;width:1900px;height:13px;background:#e6e6e6"></div>
<div style="left:27px;top:0;width:1264px;height:12px;background:#d2d2d2"></div>
<div style="left:27px;top:11px;width:1264px;height:2px;background:#217346"></div>
<div style="left:0;top:12px;width:27px;height:1px;background:#a6a6a6"></div>
<div style="left:1291px;top:12px;width:609px;height:1px;background:#a6a6a6"></div>
<svg style="left:15px;top:3px" width="8" height="8" viewBox="0 0 8 8"><path d="M8 0v8H0z" fill="#b6b6b6"/></svg>
<div style="left:250px;top:0px;width:1px;height:12px;background:#b6b6b6"></div>
<div class="t" style="left:27px;top:0.6px;width:224px;text-align:center;font-size:10px;color:#1e6b3e">B</div>
<div style="left:376px;top:0px;width:1px;height:12px;background:#b6b6b6"></div>
<div class="t" style="left:251px;top:0.6px;width:126px;text-align:center;font-size:10px;color:#1e6b3e">C</div>
<div style="left:502px;top:0px;width:1px;height:12px;background:#b6b6b6"></div>
<div class="t" style="left:377px;top:0.6px;width:126px;text-align:center;font-size:10px;color:#1e6b3e">D</div>
<div style="left:579px;top:0px;width:1px;height:12px;background:#b6b6b6"></div>
<div class="t" style="left:503px;top:0.6px;width:77px;text-align:center;font-size:10px;color:#1e6b3e">E</div>
<div style="left:803px;top:0px;width:1px;height:12px;background:#b6b6b6"></div>
<div class="t" style="left:580px;top:0.6px;width:224px;text-align:center;font-size:10px;color:#1e6b3e">F</div>
<div style="left:905px;top:0px;width:1px;height:12px;background:#b6b6b6"></div>
<div class="t" style="left:804px;top:0.6px;width:102px;text-align:center;font-size:10px;color:#1e6b3e">G</div>
<div style="left:958px;top:0px;width:1px;height:12px;background:#b6b6b6"></div>
<div class="t" style="left:906px;top:0.6px;width:53px;text-align:center;font-size:10px;color:#1e6b3e">H</div>
<div style="left:1011px;top:0px;width:1px;height:12px;background:#b6b6b6"></div>
<div class="t" style="left:959px;top:0.6px;width:53px;text-align:center;font-size:10px;color:#1e6b3e">I</div>
<div style="left:1064px;top:0px;width:1px;height:12px;background:#b6b6b6"></div>
<div class="t" style="left:1012px;top:0.6px;width:53px;text-align:center;font-size:10px;color:#1e6b3e">J</div>
<div style="left:1291px;top:0px;width:1px;height:12px;background:#b6b6b6"></div>
<div class="t" style="left:1065px;top:0.6px;width:227px;text-align:center;font-size:10px;color:#1e6b3e">K</div>
<div style="left:1388px;top:0px;width:1px;height:12px;background:#b6b6b6"></div>
<div class="t" style="left:1292px;top:0.6px;width:97px;text-align:center;font-size:10px;color:#262626">BM</div>
<div style="left:1485px;top:0px;width:1px;height:12px;background:#b6b6b6"></div>
<div class="t" style="left:1389px;top:0.6px;width:97px;text-align:center;font-size:10px;color:#262626">BN</div>
<div style="left:1582px;top:0px;width:1px;height:12px;background:#b6b6b6"></div>
<div class="t" style="left:1486px;top:0.6px;width:97px;text-align:center;font-size:10px;color:#262626">BO</div>
<div style="left:1679px;top:0px;width:1px;height:12px;background:#b6b6b6"></div>
<div class="t" style="left:1583px;top:0.6px;width:97px;text-align:center;font-size:10px;color:#262626">BP</div>
<div style="left:1776px;top:0px;width:1px;height:12px;background:#b6b6b6"></div>
<div class="t" style="left:1680px;top:0.6px;width:97px;text-align:center;font-size:10px;color:#262626">BQ</div>
<div style="left:1873px;top:0px;width:1px;height:12px;background:#b6b6b6"></div>
<div class="t" style="left:1777px;top:0.6px;width:97px;text-align:center;font-size:10px;color:#262626">BR</div>
<div class="t" style="left:1874px;top:0.6px;width:97px;text-align:center;font-size:10px;color:#262626">BS</div>
<div style="left:0;top:13px;width:26px;height:762px;background:#e6e6e6"></div>
<div style="left:0;top:13px;width:26px;height:272px;background:#d2d2d2"></div>
<div style="left:26px;top:0;width:1px;height:775px;background:#a6a6a6"></div>
<div style="left:0px;top:40px;width:26px;height:1px;background:#b6b6b6"></div>
<div class="t" style="left:0;top:28.5px;width:26px;text-align:center;font-size:10px;color:#1e6b3e">1</div>
<div style="left:0px;top:121px;width:26px;height:1px;background:#b6b6b6"></div>
<div class="t" style="left:0;top:109.5px;width:26px;text-align:center;font-size:10px;color:#1e6b3e">2</div>
<div style="left:0px;top:148px;width:26px;height:1px;background:#b6b6b6"></div>
<div class="t" style="left:0;top:136.5px;width:26px;text-align:center;font-size:10px;color:#1e6b3e">3</div>
<div style="left:0px;top:284px;width:26px;height:1px;background:#b6b6b6"></div>
<div class="t" style="left:0;top:272.5px;width:26px;text-align:center;font-size:10px;color:#1e6b3e">4</div>
<div style="left:0px;top:298px;width:26px;height:1px;background:#b6b6b6"></div>
<div class="t" style="left:0;top:286.5px;width:26px;text-align:center;font-size:10px;color:#262626">5</div>
<div style="left:0px;top:312px;width:26px;height:1px;background:#b6b6b6"></div>
<div class="t" style="left:0;top:300.5px;width:26px;text-align:center;font-size:10px;color:#262626">6</div>
<div style="left:0px;top:326px;width:26px;height:1px;background:#b6b6b6"></div>
<div class="t" style="left:0;top:314.5px;width:26px;text-align:center;font-size:10px;color:#262626">7</div>
<div style="left:0px;top:354px;width:26px;height:1px;background:#b6b6b6"></div>
<div class="t" style="left:0;top:342.5px;width:26px;text-align:center;font-size:10px;color:#262626">8</div>
<div style="left:0px;top:382px;width:26px;height:1px;background:#b6b6b6"></div>
<div class="t" style="left:0;top:370.5px;width:26px;text-align:center;font-size:10px;color:#262626">9</div>
<div style="left:0px;top:410px;width:26px;height:1px;background:#b6b6b6"></div>
<div class="t" style="left:0;top:398.5px;width:26px;text-align:center;font-size:10px;color:#262626">10</div>
<div style="left:0px;top:424px;width:26px;height:1px;background:#b6b6b6"></div>
<div class="t" style="left:0;top:412.5px;width:26px;text-align:center;font-size:10px;color:#262626">11</div>
<div style="left:0px;top:438px;width:26px;height:1px;background:#b6b6b6"></div>
<div class="t" style="left:0;top:426.5px;width:26px;text-align:center;font-size:10px;color:#262626">12</div>
<div style="left:0px;top:452px;width:26px;height:1px;background:#b6b6b6"></div>
<div class="t" style="left:0;top:440.5px;width:26px;text-align:center;font-size:10px;color:#262626">13</div>
<div style="left:0px;top:466px;width:26px;height:1px;background:#b6b6b6"></div>
<div class="t" style="left:0;top:454.5px;width:26px;text-align:center;font-size:10px;color:#262626">14</div>
<div style="left:0px;top:480px;width:26px;height:1px;background:#b6b6b6"></div>
<div class="t" style="left:0;top:468.5px;width:26px;text-align:center;font-size:10px;color:#262626">15</div>
<div style="left:0px;top:494px;width:26px;height:1px;background:#b6b6b6"></div>
<div class="t" style="left:0;top:482.5px;width:26px;text-align:center;font-size:10px;color:#262626">16</div>
<div style="left:0px;top:508px;width:26px;height:1px;background:#b6b6b6"></div>
<div class="t" style="left:0;top:496.5px;width:26px;text-align:center;font-size:10px;color:#262626">17</div>
<div style="left:0px;top:522px;width:26px;height:1px;background:#b6b6b6"></div>
<div class="t" style="left:0;top:510.5px;width:26px;text-align:center;font-size:10px;color:#262626">18</div>
<div style="left:0px;top:536px;width:26px;height:1px;background:#b6b6b6"></div>
<div class="t" style="left:0;top:524.5px;width:26px;text-align:center;font-size:10px;color:#262626">19</div>
<div style="left:0px;top:550px;width:26px;height:1px;background:#b6b6b6"></div>
<div class="t" style="left:0;top:538.5px;width:26px;text-align:center;font-size:10px;color:#262626">20</div>
<div style="left:0px;top:564px;width:26px;height:1px;background:#b6b6b6"></div>
<div class="t" style="left:0;top:552.5px;width:26px;text-align:center;font-size:10px;color:#262626">21</div>
<div style="left:0px;top:578px;width:26px;height:1px;background:#b6b6b6"></div>
<div class="t" style="left:0;top:566.5px;width:26px;text-align:center;font-size:10px;color:#262626">22</div>
<div style="left:0px;top:592px;width:26px;height:1px;background:#b6b6b6"></div>
<div class="t" style="left:0;top:580.5px;width:26px;text-align:center;font-size:10px;color:#262626">23</div>
<div style="left:0px;top:606px;width:26px;height:1px;background:#b6b6b6"></div>
<div class="t" style="left:0;top:594.5px;width:26px;text-align:center;font-size:10px;color:#262626">24</div>
<div style="left:0px;top:620px;width:26px;height:1px;background:#b6b6b6"></div>
<div class="t" style="left:0;top:608.5px;width:26px;text-align:center;font-size:10px;color:#262626">25</div>
<div style="left:0px;top:634px;width:26px;height:1px;background:#b6b6b6"></div>
<div class="t" style="left:0;top:622.5px;width:26px;text-align:center;font-size:10px;color:#262626">26</div>
<div style="left:0px;top:648px;width:26px;height:1px;background:#b6b6b6"></div>
<div class="t" style="left:0;top:636.5px;width:26px;text-align:center;font-size:10px;color:#262626">27</div>
<div style="left:0px;top:662px;width:26px;height:1px;background:#b6b6b6"></div>
<div class="t" style="left:0;top:650.5px;width:26px;text-align:center;font-size:10px;color:#262626">28</div>
<div style="left:0px;top:676px;width:26px;height:1px;background:#b6b6b6"></div>
<div class="t" style="left:0;top:664.5px;width:26px;text-align:center;font-size:10px;color:#262626">29</div>
<div style="left:0px;top:690px;width:26px;height:1px;background:#b6b6b6"></div>
<div class="t" style="left:0;top:678.5px;width:26px;text-align:center;font-size:10px;color:#262626">30</div>
<div style="left:0px;top:704px;width:26px;height:1px;background:#b6b6b6"></div>
<div class="t" style="left:0;top:692.5px;width:26px;text-align:center;font-size:10px;color:#262626">31</div>
<div style="left:0px;top:718px;width:26px;height:1px;background:#b6b6b6"></div>
<div class="t" style="left:0;top:706.5px;width:26px;text-align:center;font-size:10px;color:#262626">32</div>
<div style="left:0px;top:732px;width:26px;height:1px;background:#b6b6b6"></div>
<div class="t" style="left:0;top:720.5px;width:26px;text-align:center;font-size:10px;color:#262626">33</div>
<div style="left:0px;top:746px;width:26px;height:1px;background:#b6b6b6"></div>
<div class="t" style="left:0;top:734.5px;width:26px;text-align:center;font-size:10px;color:#262626">34</div>
<div style="left:0px;top:760px;width:26px;height:1px;background:#b6b6b6"></div>
<div class="t" style="left:0;top:748.5px;width:26px;text-align:center;font-size:10px;color:#262626">35</div>
<div style="left:0px;top:774px;width:26px;height:1px;background:#b6b6b6"></div>
<div class="t" style="left:0;top:762.5px;width:26px;text-align:center;font-size:10px;color:#262626">36</div>
</div>
<div style="left:1899px;top:207px;width:21px;height:775px;background:#e6e6e6"></div>
<div style="left:1898px;top:219px;width:1px;height:763px;background:#a0a0a0"></div>
<div style="left:0;top:981px;width:1899px;height:1px;background:#a0a0a0"></div>
<div style="left:1902px;top:209px;width:15px;height:15px;background:#fff;border:1px solid #8a8a8a"></div>
<svg style="left:1906px;top:214px" width="7" height="4" viewBox="0 0 7 4"><path d="M0 4h7L3.5 0z" fill="#222"/></svg>
<div style="left:1902px;top:224px;width:15px;height:741px;background:#fff;border:1px solid #8a8a8a"></div>
<div style="left:1902px;top:967px;width:15px;height:15px;background:#fff;border:1px solid #8a8a8a"></div>
<svg style="left:1906px;top:973px" width="7" height="4" viewBox="0 0 7 4"><path d="M0 0h7L3.5 4z" fill="#222"/></svg>
<div style="left:0;top:982px;width:1920px;height:28px;background:#e6e6e6;border-top:1px solid #c6c6c6"></div>
<svg style="left:25px;top:992px" width="6" height="8" viewBox="0 0 6 8"><path d="M5 0v8L0 4z" fill="#c0c0c0"/></svg>
<svg style="left:55px;top:992px" width="6" height="8" viewBox="0 0 6 8"><path d="M0 0v8l5-4z" fill="#c0c0c0"/></svg>
<div style="left:263px;top:983px;width:66px;height:24px;background:#fff"></div>
<div style="left:263px;top:1005px;width:66px;height:2px;background:#217346"></div>
<div style="left:100px;top:986px;width:1px;height:18px;background:#a0a0a0"></div>
<div style="left:181px;top:986px;width:1px;height:18px;background:#a0a0a0"></div>
<div style="left:450px;top:986px;width:1px;height:18px;background:#a0a0a0"></div>
<div style="left:528px;top:986px;width:1px;height:18px;background:#a0a0a0"></div>
<div style="left:619px;top:986px;width:1px;height:18px;background:#a0a0a0"></div>
<div class="t" style="left:114px;top:990px;font-size:12.75px;color:#444">Overview</div>
<div class="t" style="left:194px;top:990px;font-size:12.8px;color:#444">Company</div>
<div class="t" style="left:274.7px;top:990px;font-size:12.4px;color:#217346;font-weight:bold">Survey</div>
<div class="t" style="left:343px;top:990px;font-size:12.8px;color:#444">Add Location(s)</div>
<div class="t" style="left:463px;top:990px;font-size:12.8px;color:#444">Products</div>
<div class="t" style="left:542.6px;top:990px;font-size:12.95px;color:#444">Instruction</div>
<svg style="left:651px;top:988px" width="16" height="16" viewBox="0 0 16 16"><circle cx="8" cy="8" r="7" fill="none" stroke="#555" stroke-width="1.1"/><path d="M8 4v8M4 8h8" stroke="#555" stroke-width="1.3"/></svg>
<div style="left:1153px;top:990px;width:2px;height:2px;background:#999"></div><div style="left:1153px;top:995px;width:2px;height:2px;background:#999"></div><div style="left:1153px;top:1000px;width:2px;height:2px;background:#999"></div>
<div style="left:1169px;top:989px;width:728px;height:15px;background:#f2f2f2"></div>
<div style="left:1169px;top:989px;width:15px;height:15px;background:#fff;border:1px solid #8a8a8a"></div>
<svg style="left:1174px;top:993px" width="4" height="7" viewBox="0 0 4 7"><path d="M4 0v7L0 3.5z" fill="#222"/></svg>
<div style="left:1882px;top:989px;width:15px;height:15px;background:#fff;border:1px solid #8a8a8a"></div>
<svg style="left:1888px;top:993px" width="4" height="7" viewBox="0 0 4 7"><path d="M0 0v7l4-3.5z" fill="#222"/></svg>
<div style="left:1377px;top:989px;width:24px;height:15px;background:#fff;border:1px solid #8a8a8a"></div>
<div style="left:0;top:1010px;width:1920px;height:22px;background:#f3f2f1;border-top:1px solid #e1dfdd"></div>
<div class="t" style="left:7.5px;top:1017px;font-size:10.9px;color:#444">Ready</div>
<svg style="left:58px;top:1014px" width="15" height="14" viewBox="0 0 15 14"><circle cx="6.5" cy="2.2" r="1.7" fill="none" stroke="#333" stroke-width="1.1"/><path d="M0.8 4.5C2.5 5 4.5 5.5 6.5 5.5S10.5 5 12.2 4.5M4.5 5.5L4.8 9 3.2 13M8.5 5.5L8.3 8.5" fill="none" stroke="#333" stroke-width="1.1"/><path d="M8.5 9l5 4.5M13.5 9l-5 4.5" stroke="#333" stroke-width="1.1"/></svg>
<div class="t" style="left:76px;top:1016px;font-size:11.3px;color:#444">Accessibility: Investigate</div>
<div style="left:1626px;top:1011px;width:40px;height:21px;background:#d2d0ce"></div>
<svg style="left:1639px;top:1014px" width="14" height="14" viewBox="0 0 14 14"><path d="M1 1h12v12H1zM1 5h12M1 9h12M5 1v12M9 1v12" fill="none" stroke="#444" stroke-width="1.4"/></svg>
<svg style="left:1678px;top:1014px" width="16" height="14" viewBox="0 0 16 14"><rect x="1.5" y="0.5" width="13" height="13" fill="none" stroke="#444"/><rect x="4.5" y="3.5" width="7" height="7" fill="none" stroke="#444"/><path d="M6 5.5h4M6 7.5h4" stroke="#444"/></svg>
<svg style="left:1718px;top:1013px" width="16" height="15" viewBox="0 0 16 15"><rect x="1.5" y="0.5" width="13" height="13" fill="none" stroke="#444"/><path d="M6.5 0.5v7h3v-7" fill="none" stroke="#444"/></svg>
<div style="left:1752px;top:1020px;width:8px;height:1px;background:#444"></div>
<div style="left:1765px;top:1021px;width:100px;height:1px;background:#444"></div>
<div style="left:1797px;top:1016px;width:5px;height:11px;background:#333"></div>
<div style="left:1815px;top:1018px;width:1px;height:6px;background:#444"></div>
<svg style="left:1869px;top:1016px" width="9" height="9" viewBox="0 0 9 9"><path d="M4.5 0v9M0 4.5h9" stroke="#444"/></svg>
<div class="t" style="left:1890px;top:1015px;font-size:11.5px;color:#444">70%</div>
<div style="left:0;top:1032px;width:1920px;height:48px;background:linear-gradient(90deg,#d7d7d7 0px,#d9d9d9 525px,#efe3d7 570px,#f1e5d9 900px,#efe3d7 1360px,#dadada 1405px,#dadada 1920px);border-top:1px solid #c8c8c8"></div>
<svg style="left:639px;top:1045px" width="23" height="23" viewBox="0 0 23 23"><defs><linearGradient id="wg" x1="0" y1="0" x2="1" y2="1"><stop offset="0" stop-color="#5ecbf6"/><stop offset="1" stop-color="#0a78d4"/></linearGradient></defs><rect x="0" y="0" width="11" height="11" fill="url(#wg)"/><rect x="12" y="0" width="11" height="11" fill="url(#wg)"/><rect x="0" y="12" width="11" height="11" fill="url(#wg)"/><rect x="12" y="12" width="11" height="11" fill="url(#wg)"/></svg>
<div style="left:676px;top:1041px;width:218px;height:30px;border-radius:15px;background:#faf6f2;border:1px solid #e0d8d0"></div>
<svg style="left:687px;top:1047px" width="18" height="18" viewBox="0 0 18 18"><circle cx="7.5" cy="7.5" r="5.5" fill="none" stroke="#222" stroke-width="1.6"/><path d="M11.5 11.5L16 16" stroke="#222" stroke-width="1.8"/></svg>
<div class="t" style="left:712px;top:1049px;font-size:13px;color:#555">Search</div>
<svg style="left:906px;top:1045px" width="24" height="23" viewBox="0 0 24 23"><rect x="7" y="0" width="17" height="17" rx="2" fill="#f2f2f2" stroke="#ccc"/><rect x="0" y="6" width="17" height="17" rx="1" fill="#1f1f1f"/><rect x="5" y="4" width="12" height="12" fill="#d8d8d8"/></svg>
<svg style="left:950px;top:1044px" width="26" height="23" viewBox="0 0 26 23"><path d="M0 2h10l3 3h13v18H0z" fill="#e8a90d"/><path d="M0 8h26v15H0z" fill="#fcd462"/><rect x="8" y="14" width="11" height="6" rx="1" fill="#1a8ae0"/></svg>
<svg style="left:995px;top:1044px" width="24" height="24" viewBox="0 0 24 24"><circle cx="12" cy="12" r="11.5" fill="#db4437"/><path d="M12 12L2.1 6.2A11.5 11.5 0 0 0 12 23.5z" fill="#0f9d58"/><path d="M12 12l10.4-5.2A11.5 11.5 0 0 1 12 23.5z" fill="#ffcd40"/><circle cx="12" cy="12" r="5.3" fill="#fff"/><circle cx="12" cy="12" r="4.2" fill="#4285f4"/></svg>
<svg style="left:1038px;top:1043px" width="28" height="25" viewBox="0 0 28 25"><circle cx="18" cy="6" r="4" fill="#7b83eb"/><rect x="10" y="10" width="16" height="13" rx="5" fill="#7b83eb"/><rect x="2" y="7" width="14" height="14" rx="1.5" fill="#4b53bc"/><text x="5" y="18" font-size="11" font-weight="bold" font-family="Liberation Sans" fill="#fff">T</text><circle cx="22" cy="4" r="4" fill="#5fb544" stroke="#fff"/></svg>
<svg style="left:1082px;top:1044px" width="25" height="24" viewBox="0 0 25 24"><rect x="6" y="0" width="19" height="24" rx="2" fill="#ca64ea"/><rect x="6" y="0" width="19" height="8" fill="#ae4bd5"/><rect x="0" y="5" width="14" height="14" rx="1.5" fill="#7719aa"/><text x="2.5" y="16.5" font-size="11" font-weight="bold" font-family="Liberation Sans" fill="#fff">N</text></svg>
<svg style="left:1126px;top:1043px" width="24" height="25" viewBox="0 0 24 25"><circle cx="12" cy="13" r="11" fill="#ff7139"/><circle cx="12" cy="13" r="6" fill="#9059ff"/><path d="M3 6c3-6 13-7 18 0-3-2-8-2-10 1" fill="#ffbd4f"/></svg>
<svg style="left:1169px;top:1044px" width="26" height="24" viewBox="0 0 26 24"><rect x="7" y="0" width="19" height="24" rx="2" fill="#41a5ee"/><rect x="7" y="12" width="19" height="12" fill="#185abd"/><rect x="0" y="5" width="14" height="14" rx="1.5" fill="#185abd"/><text x="1.5" y="16.5" font-size="10.5" font-weight="bold" font-family="Liberation Sans" fill="#fff">W</text></svg>
<svg style="left:1213px;top:1044px" width="26" height="24" viewBox="0 0 26 24"><circle cx="14" cy="12" r="12" fill="#ed6c47"/><path d="M14 0a12 12 0 0 1 12 12H14z" fill="#ff8f6b"/><rect x="0" y="5" width="14" height="14" rx="1.5" fill="#c43e1c"/><text x="3" y="16.5" font-size="11" font-weight="bold" font-family="Liberation Sans" fill="#fff">P</text></svg>
<div style="left:1250px;top:1037px;width:38px;height:41px;border-radius:4px;background:#f7f3ef"></div>
<svg style="left:1257px;top:1044px" width="26" height="24" viewBox="0 0 26 24"><rect x="7" y="0" width="19" height="24" rx="2" fill="#21a366"/><rect x="7" y="12" width="19" height="12" fill="#107c41"/><rect x="0" y="5" width="14" height="14" rx="1.5" fill="#107c41"/><text x="2.5" y="16.5" font-size="11" font-weight="bold" font-family="Liberation Sans" fill="#fff">X</text></svg>
<div style="left:959px;top:1072px;width:6px;height:3px;border-radius:2px;background:#8a8a8a"></div>
<div style="left:1003px;top:1072px;width:6px;height:3px;border-radius:2px;background:#8a8a8a"></div>
<div style="left:1047px;top:1072px;width:6px;height:3px;border-radius:2px;background:#8a8a8a"></div>
<div style="left:1091px;top:1072px;width:6px;height:3px;border-radius:2px;background:#8a8a8a"></div>
<div style="left:1135px;top:1072px;width:6px;height:3px;border-radius:2px;background:#8a8a8a"></div>
<div style="left:1179px;top:1072px;width:6px;height:3px;border-radius:2px;background:#8a8a8a"></div>
<div style="left:1223px;top:1072px;width:6px;height:3px;border-radius:2px;background:#8a8a8a"></div>
<div style="left:1262px;top:1072px;width:15px;height:3px;border-radius:2px;background:#0067c0"></div>
<svg style="left:1678px;top:1051px" width="13" height="8" viewBox="0 0 13 8"><path d="M1 7l5.5-5.5L12 7" fill="none" stroke="#222" stroke-width="1.3"/></svg>
<svg style="left:1710px;top:1047px" width="13" height="18" viewBox="0 0 13 18"><rect x="4" y="0.8" width="5" height="10" rx="2.5" fill="none" stroke="#1a5fb4" stroke-width="1.4"/><path d="M1.5 8a5 5 0 0 0 10 0M6.5 13v4" fill="none" stroke="#1a5fb4" stroke-width="1.4"/></svg>
<svg style="left:1740px;top:1047px" width="19" height="18" viewBox="0 0 19 18"><rect x="1" y="1.5" width="13" height="10" fill="none" stroke="#222" stroke-width="1.2"/><path d="M7.5 11.5v3M4 15h6" stroke="#222" stroke-width="1.2"/><rect x="13" y="1" width="3" height="5" fill="#d9d9d9" stroke="#222"/><path d="M14.5 6v10" stroke="#222"/></svg>
<svg style="left:1765px;top:1048px" width="18" height="16" viewBox="0 0 18 16"><path d="M1 5.5h3l4-3.5v12l-4-3.5H1z" fill="none" stroke="#222" stroke-width="1.2"/><path d="M10.5 5.5a3 3 0 0 1 0 5" fill="none" stroke="#222" stroke-width="1.1"/><path d="M13 3.5a6 6 0 0 1 0 9" fill="none" stroke="#999" stroke-width="1"/></svg>
<svg style="left:1788px;top:1047px" width="18" height="16" viewBox="0 0 18 16"><rect x="1" y="4" width="14" height="8" rx="1.5" fill="#222"/><rect x="15" y="6.5" width="2" height="3" fill="#222"/><path d="M5 0L2.5 5h3L4 9" fill="none" stroke="#222" stroke-width="1"/></svg>
<div class="t" style="left:1834px;top:1043px;font-size:12px;color:#222">4:49 PM</div>
<div class="t" style="left:1822px;top:1059px;font-size:12px;color:#222">4/16/2024</div>
<svg style="left:1885px;top:1048px" width="15" height="16" viewBox="0 0 15 16"><path d="M7.5 1a4.5 4.5 0 0 0-4.5 4.5V10L1 12.5h13L12 10V5.5A4.5 4.5 0 0 0 7.5 1z" fill="#0a45a8"/><path d="M5.5 14a2 2 0 0 0 4 0z" fill="#0a45a8"/></svg></body></html>
